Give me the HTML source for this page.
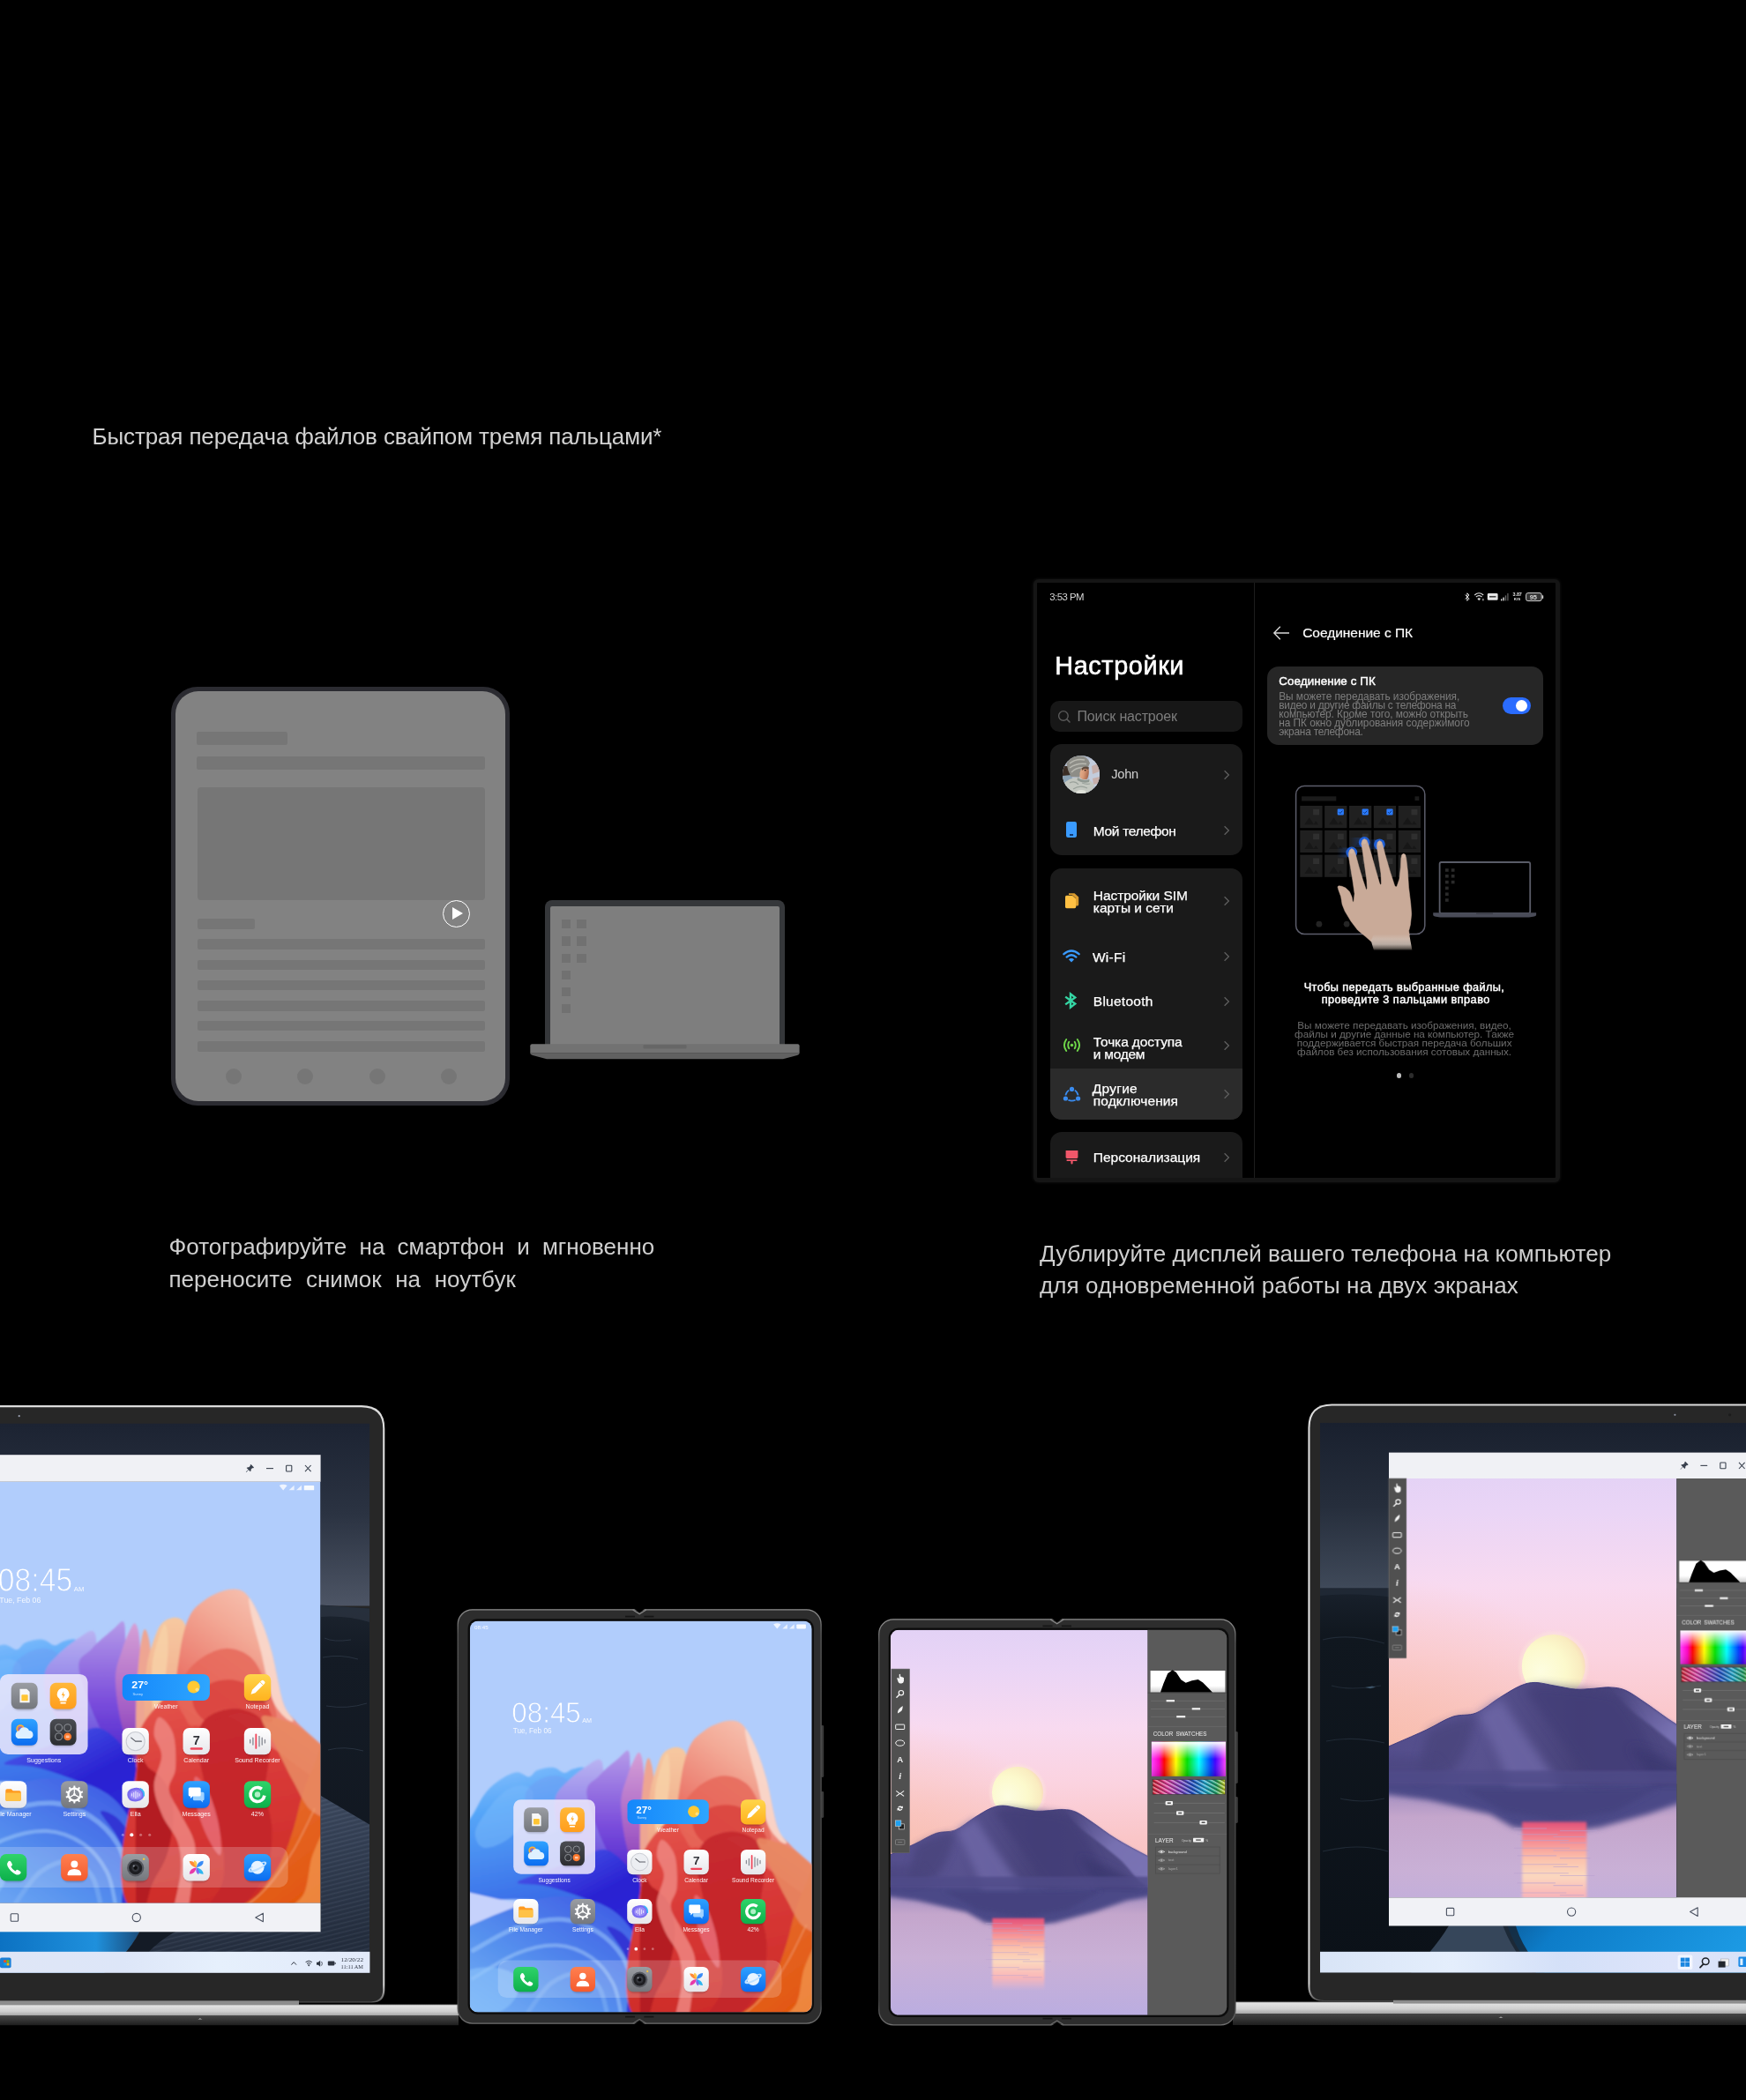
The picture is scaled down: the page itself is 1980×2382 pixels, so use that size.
<!DOCTYPE html>
<html lang="ru">
<head>
<meta charset="utf-8">
<title>Быстрая передача файлов</title>
<style>
*{margin:0;padding:0;box-sizing:border-box}
html,body{width:1980px;height:2382px;background:#000;overflow:hidden}
body{position:relative;font-family:"Liberation Sans",sans-serif;color:#fff}
#root{position:absolute;left:0;top:0;width:1980px;height:2382px;overflow:hidden;will-change:transform;transform:translateZ(0)}
.abs{position:absolute}
.t{position:absolute;white-space:nowrap;line-height:1}
/* header + captions */
#h1{left:104.5px;top:482.4px;font-size:26px;color:#d2d2d2;letter-spacing:-0.125px}
#capL{left:191.5px;top:1396.4px;font-size:26px;color:#cfcfcf;line-height:36.4px;word-spacing:7px}
#capR{left:1179px;top:1403.5px;font-size:26px;color:#cfcfcf;line-height:36.5px;letter-spacing:0.05px}
/* gray illustration */
#gt{left:194px;top:779px;width:383.5px;height:474.5px;border-radius:30px;background:#2b2b31}
#gt .in{position:absolute;left:4.5px;top:4.5px;right:4.5px;bottom:4.5px;border-radius:26px;background:#828282}
.gb{position:absolute;background:#767676;border-radius:2px}
.gc{position:absolute;width:18.4px;height:18.4px;border-radius:50%;background:#767676;top:1211.8px}
#play{left:502.3px;top:1021.3px;width:31.2px;height:31.2px;border-radius:50%;border:1.6px solid #fff}
#play:after{content:"";position:absolute;left:10px;top:6.6px;border-left:12.5px solid #fff;border-top:7.4px solid transparent;border-bottom:7.4px solid transparent}
#gl{left:617.8px;top:1021.2px;width:272.4px;height:164px;border-radius:8px 8px 0 0;background:#35373a}
#gl .in{position:absolute;left:6.3px;top:6.8px;right:6px;bottom:0;background:#7e7e7e;border-radius:2px 2px 0 0}
.gs{position:absolute;width:10.3px;height:10.4px;background:#717171}
/* settings panel */
#sp{left:1171.5px;top:656.5px;width:597px;height:684px;border-radius:6px;background:#151515;box-shadow:0 0 2.5px 0.5px #0d0d0d}
#spi{left:4.5px;top:4.5px;width:588px;height:675px;background:#000;overflow:hidden;border-radius:1px}
.card{background:#1a1a1a;border-radius:13px}
#ava{width:42.8px;height:42.8px;border-radius:50%;overflow:hidden;background:#8a8a86}
</style>
</head>
<body>
<div id="root">

<!-- HEADER -->
<div class="t" id="h1">Быстрая передача файлов свайпом тремя пальцами*</div>

<!-- GRAY TABLET + LAPTOP -->
<div class="abs" id="gt"><div class="in"></div></div>
<div class="gb" style="left:222.5px;top:830.4px;width:103.5px;height:15px"></div>
<div class="gb" style="left:222.5px;top:858.4px;width:327.5px;height:15px"></div>
<div class="gb" style="left:224.2px;top:893px;width:325.8px;height:128.4px;border-radius:4px"></div>
<div class="gb" style="left:224.2px;top:1042px;width:65.2px;height:12px"></div>
<div class="gb" style="left:224.2px;top:1065.3px;width:325.8px;height:11.6px"></div>
<div class="gb" style="left:224.2px;top:1088.6px;width:325.8px;height:11.6px"></div>
<div class="gb" style="left:224.2px;top:1111.9px;width:325.8px;height:11.6px"></div>
<div class="gb" style="left:224.2px;top:1135px;width:325.8px;height:11.6px"></div>
<div class="gb" style="left:224.2px;top:1157.9px;width:325.8px;height:11.6px"></div>
<div class="gb" style="left:224.2px;top:1180.9px;width:325.8px;height:11.8px"></div>
<div class="gc" style="left:255.8px"></div><div class="gc" style="left:337px"></div><div class="gc" style="left:418.5px"></div><div class="gc" style="left:500px"></div>
<div class="abs" id="play"></div>
<div class="abs" id="gl"><div class="in"></div></div>
<svg class="abs" style="left:595px;top:1180px" width="320" height="26" viewBox="595 1180 320 26">
  <path d="M601.3 1186.3 Q601.3 1184.3 603.3 1184.3 H904.6 Q906.6 1184.3 906.6 1186.3 V1194.7 H601.3Z" fill="#727272"/>
  <path d="M601.3 1194.7 H906.6 Q906.6 1196 904 1197 L888 1201.3 H620 L604 1197 Q601.3 1196 601.3 1194.7Z" fill="#616161"/>
  <rect x="729.5" y="1185.2" width="49" height="4.4" rx="1" fill="#666"/>
</svg>
<div class="gs" style="left:636.7px;top:1043.1px"></div><div class="gs" style="left:654.3px;top:1043.1px"></div>
<div class="gs" style="left:636.7px;top:1062.4px"></div><div class="gs" style="left:654.3px;top:1062.4px"></div>
<div class="gs" style="left:636.7px;top:1081.6px"></div><div class="gs" style="left:654.3px;top:1081.6px"></div>
<div class="gs" style="left:636.7px;top:1100.7px"></div>
<div class="gs" style="left:636.7px;top:1119.9px"></div>
<div class="gs" style="left:636.7px;top:1139px"></div>

<!-- CAPTIONS -->
<div class="t" id="capL">Фотографируйте на смартфон и мгновенно<br><span style="word-spacing:8.4px">переносите снимок на ноутбук</span></div>
<div class="t" id="capR">Дублируйте дисплей вашего телефона на компьютер<br><span style="letter-spacing:0.12px">для одновременной работы на двух экранах</span></div>

<!-- SETTINGS PANEL -->
<div class="abs" id="sp"><div class="abs" id="spi">
<div class="abs" style="left:246.2px;top:0;width:1px;height:675px;background:#1d1d1d"></div>
<div class="t" style="left:14.2px;top:10.7px;font-size:11.4px;color:#d6d6d6;font-weight:400;letter-spacing:-0.5px">3:53 PM</div>
<div class="t" style="left:20.3px;top:79.9px;font-size:28.8px;color:#fff;font-weight:400;letter-spacing:0.62px;-webkit-text-stroke:0.6px #fff">Настройки</div>
<div class="abs" style="left:14.8px;top:133.9px;width:217.9px;height:34.8px;border-radius:10px;background:#171717"></div>
<svg class="abs" style="left:22.5px;top:143.5px" width="16" height="16" viewBox="0 0 16 16"><circle cx="6.9" cy="6.9" r="5.3" fill="none" stroke="#5a5a5a" stroke-width="1.4"/><path d="M10.9 10.9 L14 14" stroke="#5a5a5a" stroke-width="1.5" stroke-linecap="round"/></svg>
<div class="t" style="left:45.5px;top:144.1px;font-size:16px;color:#7c7c7c;font-weight:400;letter-spacing:-0.15px">Поиск настроек</div>
<div class="abs card" style="left:14.8px;top:183.0px;width:217.9px;height:126px"></div>
<div class="abs" id="ava" style="left:28.6px;top:195.9px"><svg width="42.8" height="42.8" viewBox="0 0 42.8 42.8"><defs><filter id="avb"><feGaussianBlur stdDeviation="0.7"/></filter><linearGradient id="avf" x1="0" y1="0" x2="1" y2="0.3"><stop offset="0" stop-color="#e6b391"/><stop offset="0.55" stop-color="#d89a78"/><stop offset="1" stop-color="#a96a4e"/></linearGradient></defs><rect width="42.8" height="42.8" fill="#b3bdd0"/><g filter="url(#avb)"><path d="M30 4 L43 8 V34 L30 36Z" fill="#c3ccdc"/><path d="M33 12 l7 -3 l2 9 l-8 3z M34 26 l8 -2 v7 l-7 2z" fill="#c7a69c" opacity="0.8"/><rect x="0" y="12" width="9" height="12" fill="#3b2e27"/><path d="M0 23 L10 22 L13 34 L2 36Z" fill="#8aa1b3"/><path d="M4.5 9 Q8 1 19 0 Q28 0.5 31 8.5 L28.5 14 Q22 17 19 24.5 L9.5 24 Q5.5 17 4.5 9Z" fill="#8d8d87"/><path d="M8 9 Q15 3 25 5 M8 14 Q16 8 27 9.5 M10 19 Q16 13 24 14" stroke="#b9b9b1" stroke-width="1.5" fill="none"/><path d="M21 15 Q25 11.5 29.5 14.5 Q30.5 21 28 26.5 Q24 28.5 19.5 25 Q19 19 21 15Z" fill="url(#avf)"/><path d="M21.5 14.5 Q25 11 30 13.5 L29 16 Q25 13.5 22 17Z" fill="#5e4a3c"/><ellipse cx="25.6" cy="16.8" rx="1.1" ry="0.8" fill="#2a1c16"/><path d="M0 33 Q8 24 19 25 Q24 29 30 27 L36 33 L32 43 H4Z" fill="#c3c7c0"/><path d="M17 25 Q23 29.5 30.5 27 L30 30 Q23 32 16.5 28Z" fill="#8f9892"/><path d="M8 31 Q14 28 18 33 M12 38 Q20 33 28 37 M22 31 Q27 33 31 32" stroke="#9aa29b" stroke-width="1.2" fill="none"/><path d="M14 43 Q18 37 26 40 L27 43Z" fill="#e0e2da"/></g></svg></div>
<div class="t" style="left:84.3px;top:210.4px;font-size:14.6px;color:#d0d0d0;font-weight:400;letter-spacing:-0.25px">John</div>
<svg class="abs" style="left:211.1px;top:211.5px" width="8" height="12" viewBox="0 0 8 12"><path d="M1.6 1.2 L6.4 6 L1.6 10.8" fill="none" stroke="#5f5f5f" stroke-width="1.3"/></svg>
<div class="abs" style="left:32.6px;top:271.3px;width:12.8px;height:17.8px;border-radius:2.2px;background:#3a9bff"><div style="position:absolute;left:4.4px;bottom:2.6px;width:4px;height:1.6px;background:#123a72"></div></div>
<div class="t" style="left:63.8px;top:273.8px;font-size:15.5px;color:#fff;font-weight:400;-webkit-text-stroke:0.25px #fff;letter-spacing:-0.32px">Мой телефон</div>
<svg class="abs" style="left:211.1px;top:274.9px" width="8" height="12" viewBox="0 0 8 12"><path d="M1.6 1.2 L6.4 6 L1.6 10.8" fill="none" stroke="#5f5f5f" stroke-width="1.3"/></svg>
<div class="abs card" style="left:14.8px;top:323.7px;width:217.9px;height:285px;overflow:hidden"><div style="position:absolute;left:0;right:0;top:226.9px;bottom:0;background:#2b2b2b"></div></div>
<svg class="abs" style="left:31.0px;top:351.4px" width="18" height="20" viewBox="0 0 18 20"><path d="M5 1.2 H11.5 L16.2 5.6 V14 Q16.2 15.6 14.6 15.6 H13 V7 L8.6 3 H5Z" fill="#d89a2e"/><path d="M2.6 3.8 H9 L13.2 7.6 V16.6 Q13.2 18.2 11.6 18.2 H2.6 Q1 18.2 1 16.6 V5.4 Q1 3.8 2.6 3.8Z" fill="#ffc043"/></svg>
<div class="t" style="left:63.8px;top:346.7px;font-size:15.5px;color:#fff;font-weight:400;-webkit-text-stroke:0.25px #fff;letter-spacing:-0.07px">Настройки SIM</div>
<div class="t" style="left:63.8px;top:360.6px;font-size:15.5px;color:#fff;font-weight:400;-webkit-text-stroke:0.25px #fff;letter-spacing:0px">карты и сети</div>
<svg class="abs" style="left:211.1px;top:355.2px" width="8" height="12" viewBox="0 0 8 12"><path d="M1.6 1.2 L6.4 6 L1.6 10.8" fill="none" stroke="#5f5f5f" stroke-width="1.3"/></svg>
<svg class="abs" style="left:29.0px;top:415.8px" width="20" height="16" viewBox="0 0 20 16"><path d="M1.4 5.2 Q10 -2.2 18.6 5.2" fill="none" stroke="#3a9bff" stroke-width="2.3" stroke-linecap="round"/><path d="M4.6 8.6 Q10 4 15.4 8.6" fill="none" stroke="#3a9bff" stroke-width="2.3" stroke-linecap="round"/><path d="M10 14.6 L6.9 11.3 Q10 8.9 13.1 11.3Z" fill="#3a9bff"/></svg>
<div class="t" style="left:62.9px;top:416.5px;font-size:15.5px;color:#fff;font-weight:400;-webkit-text-stroke:0.25px #fff;letter-spacing:0.3px">Wi-Fi</div>
<svg class="abs" style="left:211.1px;top:417.7px" width="8" height="12" viewBox="0 0 8 12"><path d="M1.6 1.2 L6.4 6 L1.6 10.8" fill="none" stroke="#5f5f5f" stroke-width="1.3"/></svg>
<svg class="abs" style="left:30.0px;top:464.3px" width="17" height="20" viewBox="0 0 17 20"><path d="M2.2 5.6 L13.2 13.6 L8 17.6 V2.4 L13.2 6.4 L2.2 14.4" fill="none" stroke="#35d6a4" stroke-width="2.4" stroke-linejoin="miter"/></svg>
<div class="t" style="left:63.8px;top:466.9px;font-size:15.5px;color:#fff;font-weight:400;-webkit-text-stroke:0.25px #fff;letter-spacing:0.26px">Bluetooth</div>
<svg class="abs" style="left:211.1px;top:468.5px" width="8" height="12" viewBox="0 0 8 12"><path d="M1.6 1.2 L6.4 6 L1.6 10.8" fill="none" stroke="#5f5f5f" stroke-width="1.3"/></svg>
<svg class="abs" style="left:28.5px;top:516.4px" width="21" height="17" viewBox="0 0 21 17"><g fill="none" stroke="#6fd84a" stroke-width="1.9" stroke-linecap="round"><path d="M4.2 2 Q-0.4 8.5 4.2 15"/><path d="M16.8 2 Q21.4 8.5 16.8 15"/><path d="M7.3 4.8 Q5 8.5 7.3 12.2"/><path d="M13.7 4.8 Q16 8.5 13.7 12.2"/></g><circle cx="10.5" cy="8.5" r="1.7" fill="#6fd84a"/></svg>
<div class="t" style="left:63.8px;top:512.7px;font-size:15.5px;color:#fff;font-weight:400;-webkit-text-stroke:0.25px #fff;letter-spacing:-0.1px">Точка доступа</div>
<div class="t" style="left:63.8px;top:526.8px;font-size:15.5px;color:#fff;font-weight:400;-webkit-text-stroke:0.25px #fff;letter-spacing:-0.25px">и модем</div>
<svg class="abs" style="left:211.1px;top:519.3px" width="8" height="12" viewBox="0 0 8 12"><path d="M1.6 1.2 L6.4 6 L1.6 10.8" fill="none" stroke="#5f5f5f" stroke-width="1.3"/></svg>
<svg class="abs" style="left:28.5px;top:570.5px" width="21" height="19" viewBox="0 0 21 19"><g fill="none" stroke="#3a8cf0" stroke-width="1.7"><path d="M7.2 4.6 Q4 6.6 3.4 10.4"/><path d="M13.8 4.6 Q17 6.6 17.6 10.4"/><path d="M6.4 15.8 Q10.5 17.6 14.6 15.8"/></g><circle cx="10.5" cy="3.4" r="2.6" fill="#3a8cf0"/><circle cx="3.4" cy="14" r="2.6" fill="#3a8cf0"/><circle cx="17.6" cy="14" r="2.6" fill="#3a8cf0"/></svg>
<div class="t" style="left:62.7px;top:565.7px;font-size:15.5px;color:#fff;font-weight:400;-webkit-text-stroke:0.25px #fff;letter-spacing:0.28px">Другие</div>
<div class="t" style="left:63.8px;top:579.6px;font-size:15.5px;color:#fff;font-weight:400;-webkit-text-stroke:0.25px #fff;letter-spacing:0.08px">подключения</div>
<svg class="abs" style="left:211.1px;top:573.7px" width="8" height="12" viewBox="0 0 8 12"><path d="M1.6 1.2 L6.4 6 L1.6 10.8" fill="none" stroke="#5f5f5f" stroke-width="1.3"/></svg>
<div class="abs card" style="left:14.8px;top:622.8px;width:217.9px;height:80px"></div>
<svg class="abs" style="left:31.0px;top:643.0px" width="17" height="18" viewBox="0 0 17 18"><path d="M1.6 1 H15.4 V8.6 Q15.4 10 14 10 H3 Q1.6 10 1.6 8.6Z" fill="#f0576a"/><path d="M2.6 11.2 H14.4 V12.9 H9.6 V15.2 Q9.6 16.4 8.5 16.4 Q7.4 16.4 7.4 15.2 V12.9 H2.6Z" fill="#f0576a"/></svg>
<div class="t" style="left:63.8px;top:643.6px;font-size:15.5px;color:#fff;font-weight:400;-webkit-text-stroke:0.25px #fff;letter-spacing:0px">Персонализация</div>
<svg class="abs" style="left:211.1px;top:645.7px" width="8" height="12" viewBox="0 0 8 12"><path d="M1.6 1.2 L6.4 6 L1.6 10.8" fill="none" stroke="#5f5f5f" stroke-width="1.3"/></svg>
<svg class="abs" style="left:482.0px;top:9.0px" width="94" height="14" viewBox="1658 670 94 14">
<path d="M1661.6 674.6 L1666 679.2 L1663.8 681.4 V672.8 L1666 675 L1661.6 679.6" fill="none" stroke="#e0e0e0" stroke-width="1"/>
<path d="M1672.2 675 Q1677.2 670.6 1682.2 675" fill="none" stroke="#e0e0e0" stroke-width="1.1"/><path d="M1673.9 677 Q1677.2 674.2 1680.5 677" fill="none" stroke="#e0e0e0" stroke-width="1.1"/><path d="M1677.2 681.2 L1675.3 678.9 Q1677.2 677.5 1679.1 678.9Z" fill="#e0e0e0"/><rect x="1681.4" y="679" width="1" height="2.4" fill="#e0e0e0"/>
<rect x="1686.8" y="673" width="11.8" height="7.8" rx="1.4" fill="#e6e6e6"/><rect x="1689" y="676" width="7.4" height="1.6" fill="#444"/>
<rect x="1702" y="679.4" width="1.4" height="2" fill="#e0e0e0"/><rect x="1704.4" y="677.6" width="1.4" height="3.8" fill="#e0e0e0"/><rect x="1706.8" y="675.4" width="1.4" height="6" fill="#666"/><rect x="1709.2" y="673" width="1.4" height="8.4" fill="#555"/>
<rect x="1730.6" y="672.6" width="17.6" height="9" rx="2.2" fill="#333" stroke="#cfcfcf" stroke-width="1"/><rect x="1748.8" y="675.2" width="1.4" height="3.8" rx="0.6" fill="#cfcfcf"/>
</svg>
<div class="t" style="left:539.6px;top:11.0px;font-size:5.4px;color:#e0e0e0;font-weight:700;letter-spacing:-0.1px">3.87</div>
<div class="t" style="left:540.8px;top:16.9px;font-size:4.4px;color:#e0e0e0;font-weight:700;">K/S</div>
<div class="t" style="left:558.8px;top:13.1px;font-size:7.4px;color:#d8d8d8;font-weight:700;letter-spacing:-0.1px">95</div>
<svg class="abs" style="left:267.0px;top:47.5px" width="21" height="18" viewBox="0 0 21 18"><path d="M8.8 1.8 L1.8 9 L8.8 16.2 M2 9 H19" fill="none" stroke="#d8d8d8" stroke-width="1.35"/></svg>
<div class="t" style="left:301.2px;top:49.0px;font-size:15.5px;color:#fff;font-weight:400;letter-spacing:-0.03px;-webkit-text-stroke:0.2px #fff">Соединение с ПК</div>
<div class="abs" style="left:261.2px;top:95.4px;width:312.7px;height:88.8px;border-radius:13px;background:#262626"></div>
<div class="t" style="left:274.2px;top:104.8px;font-size:13.4px;color:#fff;font-weight:400;letter-spacing:0.1px;-webkit-text-stroke:0.45px #fff">Соединение с ПК</div>
<div class="t" style="left:274.2px;top:123.9px;font-size:11.9px;color:#7d7d7d;font-weight:400;letter-spacing:-0.06px">Вы можете передавать изображения,</div>
<div class="t" style="left:274.2px;top:133.7px;font-size:11.9px;color:#7d7d7d;font-weight:400;letter-spacing:-0.23px">видео и другие файлы с телефона на</div>
<div class="t" style="left:274.2px;top:143.9px;font-size:11.9px;color:#7d7d7d;font-weight:400;letter-spacing:-0.065px">компьютер. Кроме того, можно открыть</div>
<div class="t" style="left:274.2px;top:153.9px;font-size:11.9px;color:#7d7d7d;font-weight:400;letter-spacing:-0.05px">на ПК окно дублирования содержимого</div>
<div class="t" style="left:274.2px;top:163.9px;font-size:11.9px;color:#7d7d7d;font-weight:400;letter-spacing:-0.22px">экрана телефона.</div>
<div class="abs" style="left:527.8px;top:129.8px;width:32.2px;height:19.6px;border-radius:10px;background:#2a6cff"><div style="position:absolute;right:3.6px;top:3.3px;width:13px;height:13px;border-radius:50%;background:#fff"></div></div>
<svg class="abs" style="left:284.0px;top:224.0px" width="290" height="200" viewBox="1460 885 290 200">
<defs><linearGradient id="wr" x1="0" y1="0" x2="0" y2="1"><stop offset="0" stop-color="#c9aa98"/><stop offset="0.3" stop-color="#cdb8ab"/><stop offset="0.62" stop-color="#b9aba2"/><stop offset="0.88" stop-color="#5e5650"/><stop offset="1" stop-color="#000"/></linearGradient><linearGradient id="tr" x1="0" y1="0" x2="1" y2="0"><stop offset="0" stop-color="#1d4fb0" stop-opacity="0"/><stop offset="1" stop-color="#1d4fb0" stop-opacity="0.45"/></linearGradient><g id="cell"><rect width="25.3" height="25.2" fill="#202020"/><path d="M5.1 21.3 L10.4 13.3 L15.8 21.3Z M15.3 21.3 L17.8 17.3 L20.7 21.3Z" fill="#171717"/></g></defs>
<rect x="1469.6" y="891.4" width="146.2" height="168" rx="9.5" fill="#000" stroke="#5c5d6b" stroke-width="1.5"/>
<rect x="1476.1" y="903.3" width="39.2" height="5.2" fill="#1b1b1b"/><rect x="1604.5" y="903.3" width="4.8" height="4.8" fill="#1b1b1b"/>
<use href="#cell" x="1474.3" y="914.0"/>
<rect x="1489.1" y="917.8" width="6.9" height="6.6" fill="#2f2f2f"/>
<use href="#cell" x="1502.1" y="914.0"/>
<rect x="1516.7" y="917.6" width="7.2" height="7" rx="1" fill="#2a7bff"/><path d="M1518.4 921.1 l1.4 1.5 l2.6 -3" fill="none" stroke="#0d2f6a" stroke-width="0.9"/>
<use href="#cell" x="1530.0" y="914.0"/>
<rect x="1544.6" y="917.6" width="7.2" height="7" rx="1" fill="#2a7bff"/><path d="M1546.3 921.1 l1.4 1.5 l2.6 -3" fill="none" stroke="#0d2f6a" stroke-width="0.9"/>
<use href="#cell" x="1557.8" y="914.0"/>
<rect x="1572.4" y="917.6" width="7.2" height="7" rx="1" fill="#2a7bff"/><path d="M1574.1 921.1 l1.4 1.5 l2.6 -3" fill="none" stroke="#0d2f6a" stroke-width="0.9"/>
<use href="#cell" x="1585.7" y="914.0"/>
<rect x="1600.5" y="917.8" width="6.9" height="6.6" fill="#2f2f2f"/>
<use href="#cell" x="1474.3" y="941.8"/>
<rect x="1489.1" y="945.6" width="6.9" height="6.6" fill="#2f2f2f"/>
<use href="#cell" x="1502.1" y="941.8"/>
<rect x="1516.9" y="945.6" width="6.9" height="6.6" fill="#2f2f2f"/>
<use href="#cell" x="1530.0" y="941.8"/>
<rect x="1544.8" y="945.6" width="6.9" height="6.6" fill="#2f2f2f"/>
<use href="#cell" x="1557.8" y="941.8"/>
<rect x="1572.6" y="945.6" width="6.9" height="6.6" fill="#2f2f2f"/>
<use href="#cell" x="1585.7" y="941.8"/>
<rect x="1600.5" y="945.6" width="6.9" height="6.6" fill="#2f2f2f"/>
<use href="#cell" x="1474.3" y="969.6"/>
<rect x="1489.1" y="973.4" width="6.9" height="6.6" fill="#2f2f2f"/>
<use href="#cell" x="1502.1" y="969.6"/>
<rect x="1516.9" y="973.4" width="6.9" height="6.6" fill="#2f2f2f"/>
<use href="#cell" x="1530.0" y="969.6"/>
<rect x="1544.8" y="973.4" width="6.9" height="6.6" fill="#2f2f2f"/>
<use href="#cell" x="1557.8" y="969.6"/>
<rect x="1572.6" y="973.4" width="6.9" height="6.6" fill="#2f2f2f"/>
<use href="#cell" x="1585.7" y="969.6"/>
<rect x="1600.5" y="973.4" width="6.9" height="6.6" fill="#2f2f2f"/>
<circle cx="1495.9" cy="1048.2" r="3.4" fill="#242424"/>
<circle cx="1527.1" cy="1048.2" r="3.4" fill="#242424"/>
<circle cx="1558.3" cy="1048.2" r="3.4" fill="#242424"/>
<circle cx="1589.5" cy="1048.2" r="3.4" fill="#242424"/>
<rect x="1515.8" y="961.5" width="17" height="11" fill="url(#tr)"/>
<circle cx="1532.8" cy="967.0" r="6.4" fill="#1f5fd6"/>
<rect x="1530.2" y="950.0" width="17" height="11" fill="url(#tr)"/>
<circle cx="1547.2" cy="955.5" r="6.4" fill="#1f5fd6"/>
<rect x="1547.4" y="952.3" width="17" height="11" fill="url(#tr)"/>
<circle cx="1564.4" cy="957.8" r="6.4" fill="#1f5fd6"/>
<path d="M1535.0 1023.3 L1536.1 1013.8 L1533.9 998.6 L1531.4 983.3 L1529.6 972.7 L1529.3 968.1 L1530.5 964.3 L1532.8 962.6 L1535.2 963.9 L1537.0 968.1 L1541.1 983.3 L1545.7 998.6 L1548.8 1007.7 L1549.5 1009.6 L1550.3 1007.7 L1549.9 998.6 L1547.2 979.5 L1545.0 964.3 L1543.8 956.7 L1545.0 952.9 L1547.2 951.5 L1549.9 952.9 L1551.4 956.7 L1554.9 968.1 L1560.2 987.1 L1564.4 1001.6 L1565.5 1003.8 L1566.4 1002.4 L1566.0 991.0 L1563.2 972.7 L1561.3 959.7 L1562.1 955.5 L1564.4 953.4 L1566.9 955.1 L1568.2 959.0 L1570.9 969.6 L1576.2 987.9 L1581.5 1004.3 L1583.0 1006.2 L1584.2 1005.0 L1586.9 997.0 L1588.4 983.3 L1588.8 973.4 L1589.9 969.6 L1591.8 968.5 L1593.7 970.0 L1594.7 973.4 L1596.4 987.9 L1597.5 1006.2 L1599.8 1025.2 L1600.7 1036.7 L1599.4 1048.9 L1597.7 1055.7 L1598.3 1061.0 L1554.9 1067.9 L1548.8 1062.6 L1539.6 1055.0 L1532.0 1045.0 L1525.1 1033.6 L1522.1 1026.0 L1520.6 1016.9 L1517.9 1009.6 L1516.9 1005.8 L1518.3 1004.8 L1521.7 1005.3 L1525.9 1007.1 L1530.5 1011.5 L1533.1 1017.6 L1533.9 1022.2Z" fill="#c9aa98" stroke="#c9aa98" stroke-width="0.5" stroke-linejoin="round"/>
<path d="M1598.1 1059.5 L1601.5 1078.2 L1558.1 1078.2 L1554.7 1067.1 L1557.9 1059.5Z" fill="url(#wr)"/>
<ellipse cx="1532.8" cy="965.8" rx="2.3" ry="2.6" fill="#d6b9a8" opacity="0.7"/>
<ellipse cx="1547.2" cy="954.8" rx="2.3" ry="2.6" fill="#d6b9a8" opacity="0.7"/>
<ellipse cx="1564.4" cy="956.7" rx="2.3" ry="2.6" fill="#d6b9a8" opacity="0.7"/>
<ellipse cx="1591.8" cy="970.8" rx="2.3" ry="2.6" fill="#d6b9a8" opacity="0.7"/>
<rect x="1632.6" y="978" width="102.6" height="58" rx="2" fill="#000" stroke="#5a5c68" stroke-width="1.8"/>
<path d="M1625.2 1035.3 H1742.1 V1038 Q1742.1 1039 1740 1039.4 L1734 1040.6 H1633 L1627 1039.4 Q1625.2 1039 1625.2 1038Z" fill="#4a4c58"/>
<rect x="1674" y="1035.6" width="19" height="1.4" fill="#3a3c46"/>
<rect x="1639" y="985.2" width="3.7" height="3.6" fill="#2a2a2a"/>
<rect x="1645.8" y="985.2" width="3.7" height="3.6" fill="#2a2a2a"/>
<rect x="1639" y="992.0" width="3.7" height="3.6" fill="#2a2a2a"/>
<rect x="1645.8" y="992.0" width="3.7" height="3.6" fill="#2a2a2a"/>
<rect x="1639" y="998.8" width="3.7" height="3.6" fill="#2a2a2a"/>
<rect x="1645.8" y="998.8" width="3.7" height="3.6" fill="#2a2a2a"/>
<rect x="1639" y="1005.6" width="3.7" height="3.6" fill="#2a2a2a"/>
<rect x="1639" y="1012.4" width="3.7" height="3.6" fill="#2a2a2a"/>
<rect x="1639" y="1019.2" width="3.7" height="3.6" fill="#2a2a2a"/>
</svg>
<div class="t" style="left:216.5px;width:400px;text-align:center;top:453.3px;font-size:12.7px;color:#fff;font-weight:400;letter-spacing:0.42px;-webkit-text-stroke:0.45px #fff">Чтобы передать выбранные файлы,</div>
<div class="t" style="left:218.2px;width:400px;text-align:center;top:467.3px;font-size:12.7px;color:#fff;font-weight:400;letter-spacing:0.46px;-webkit-text-stroke:0.45px #fff">проведите 3 пальцами вправо</div>
<div class="t" style="left:216.6px;width:400px;text-align:center;top:495.8px;font-size:11.7px;color:#6c6c6c;font-weight:400;">Вы можете передавать изображения, видео,</div>
<div class="t" style="left:216.6px;width:400px;text-align:center;top:505.7px;font-size:11.7px;color:#6c6c6c;font-weight:400;">файлы и другие данные на компьютер. Также</div>
<div class="t" style="left:216.6px;width:400px;text-align:center;top:515.6px;font-size:11.7px;color:#6c6c6c;font-weight:400;">поддерживается быстрая передача больших</div>
<div class="t" style="left:216.6px;width:400px;text-align:center;top:525.7px;font-size:11.7px;color:#6c6c6c;font-weight:400;">файлов без использования сотовых данных.</div>
<div class="abs" style="left:407.5px;top:556.4px;width:5.4px;height:5.4px;border-radius:50%;background:#bdbdbd"></div>
<div class="abs" style="left:421.7px;top:556.4px;width:5.4px;height:5.4px;border-radius:50%;background:#2c2c2c"></div>
</div></div>

<!-- DEVICES -->
<svg width="0" height="0" style="position:absolute"><defs>
<linearGradient id="frm" x1="0" y1="0" x2="0" y2="1"><stop offset="0" stop-color="#3a3a3a"/><stop offset="0.04" stop-color="#2a2a2a"/><stop offset="0.96" stop-color="#262626"/><stop offset="1" stop-color="#1c1c1c"/></linearGradient>
<linearGradient id="fst" x1="0" y1="0" x2="0" y2="1"><stop offset="0" stop-color="#909090"/><stop offset="0.06" stop-color="#5a5a5a"/><stop offset="0.94" stop-color="#3c3c3c"/><stop offset="1" stop-color="#707070"/></linearGradient>
</defs>
<symbol id="home" viewBox="0 0 388.1 444.2" preserveAspectRatio="none">
<defs>
<linearGradient id="hb1" x1="0" y1="0" x2="0.3" y2="1"><stop offset="0" stop-color="#8cc4fd"/><stop offset="0.35" stop-color="#55a5f8"/><stop offset="1" stop-color="#3a6ee8"/></linearGradient>
<linearGradient id="hb2" x1="0" y1="0" x2="0" y2="1"><stop offset="0" stop-color="#b9b3f2"/><stop offset="0.5" stop-color="#8a78e6"/><stop offset="1" stop-color="#5a34d6"/></linearGradient>
<linearGradient id="hb3" x1="0" y1="0" x2="0" y2="1"><stop offset="0" stop-color="#b59be8"/><stop offset="0.55" stop-color="#7c4fdc"/><stop offset="1" stop-color="#4a22cc"/></linearGradient>
<linearGradient id="hb4" x1="0" y1="0" x2="0" y2="1"><stop offset="0" stop-color="#d6a0d6"/><stop offset="0.6" stop-color="#a55fc6"/><stop offset="1" stop-color="#7a2fb0"/></linearGradient>
<linearGradient id="hb5" x1="0.2" y1="0" x2="0.8" y2="1"><stop offset="0" stop-color="#4a5cea"/><stop offset="0.5" stop-color="#2a22d2"/><stop offset="1" stop-color="#2e2ad8"/></linearGradient>
<linearGradient id="hb6" x1="0" y1="1" x2="1" y2="0"><stop offset="0" stop-color="#86bdf9"/><stop offset="0.45" stop-color="#5590ee"/><stop offset="1" stop-color="#3a50e2"/></linearGradient>
<linearGradient id="hr1" x1="0.8" y1="0" x2="0.2" y2="1"><stop offset="0" stop-color="#f9d3c4"/><stop offset="0.35" stop-color="#f3a996"/><stop offset="0.75" stop-color="#e8655a"/><stop offset="1" stop-color="#dc3f3c"/></linearGradient>
<linearGradient id="hr2" x1="0" y1="0" x2="0.2" y2="1"><stop offset="0" stop-color="#e85e52"/><stop offset="0.5" stop-color="#d93a38"/><stop offset="1" stop-color="#cc2a26"/></linearGradient>
<linearGradient id="hr3" x1="0" y1="0" x2="0.4" y2="1"><stop offset="0" stop-color="#ee9a72"/><stop offset="0.45" stop-color="#e5682a"/><stop offset="1" stop-color="#e2560e"/></linearGradient>
<linearGradient id="hr4" x1="0" y1="0" x2="0" y2="1"><stop offset="0" stop-color="#f6c8a0"/><stop offset="1" stop-color="#ee9a80"/></linearGradient>
<filter id="hbl" x="-5%" y="-5%" width="110%" height="110%"><feGaussianBlur stdDeviation="0.9"/></filter>
<filter id="hbl3" x="-20%" y="-20%" width="140%" height="140%"><feGaussianBlur stdDeviation="4"/></filter>
<filter id="ish" x="-20%" y="-20%" width="140%" height="150%"><feGaussianBlur stdDeviation="1.2"/></filter>
</defs>
<rect width="388.1" height="444.2" fill="#b1cdfc"/>
<g filter="url(#hbl)">
<path d="M-11.7 248.3 C-9.1 233.2 -1.0 227.9 4.1 218.9 C9.2 209.8 13.1 200.8 18.8 194.0 C24.4 187.2 32.2 181.9 38.0 178.2 C43.9 174.5 49.0 172.0 53.9 171.8 C58.8 171.6 63.7 177.4 67.4 177.0 C71.2 176.7 72.0 171.3 76.5 169.6 C81.0 167.8 89.5 165.9 94.6 166.4 C99.7 166.9 103.3 172.2 107.0 172.5 C110.8 172.8 113.3 168.9 117.2 168.0 C121.2 167.0 126.6 164.8 130.8 166.8 C134.9 168.9 135.7 169.1 142.1 180.4 C148.5 191.7 160.6 215.5 169.2 234.7 C177.9 254.0 200.2 281.5 194.1 295.8 C188.1 310.1 154.5 317.3 133.0 320.7 C111.6 324.1 89.3 318.1 65.2 316.2 C41.0 314.3 1.1 320.7 -11.7 309.4 C-24.6 298.1 -14.4 263.4 -11.7 248.3Z" fill="url(#hb1)"/>
<path d="M6.3 239.2 C7.5 231.7 16.2 220.0 22.2 212.1 C28.2 204.2 36.1 195.9 42.5 191.7 C49.0 187.6 55.7 186.5 60.6 187.2 C65.6 188.0 71.2 190.2 72.0 196.3 C72.7 202.3 70.1 214.7 65.2 223.4 C60.3 232.1 50.8 242.6 42.5 248.3 C34.3 254.0 21.4 258.9 15.4 257.3 C9.4 255.8 5.2 246.8 6.3 239.2Z" fill="#7cbcfb" opacity="0.5"/>
<path d="M62.9 198.5 C64.0 189.5 72.7 184.2 78.7 180.4 C84.8 176.7 93.5 175.1 99.1 175.9 C104.8 176.7 110.0 178.9 112.7 184.9 C115.3 191.0 117.6 203.0 114.9 212.1 C112.3 221.1 104.0 235.5 96.8 239.2 C89.7 243.0 77.6 241.5 72.0 234.7 C66.3 227.9 61.8 207.6 62.9 198.5Z" fill="#6f9ff4" opacity="0.55"/>
<path d="M96.8 203.0 C98.0 193.6 104.4 189.1 110.4 182.7 C116.5 176.3 126.7 168.7 133.0 164.6 C139.4 160.4 145.0 155.2 148.4 157.8 C151.8 160.4 150.7 169.5 153.4 180.4 C156.1 191.4 157.9 204.2 164.7 223.4 C171.5 242.6 197.9 285.6 194.1 295.8 C190.4 306.0 157.2 293.9 142.1 284.5 C127.0 275.1 111.2 252.8 103.6 239.2 C96.1 225.7 95.7 212.5 96.8 203.0Z" fill="url(#hb2)"/>
<path d="M133.0 198.5 C130.8 183.1 140.6 183.1 146.6 175.9 C152.7 168.7 163.7 160.2 169.2 155.5 C174.8 150.9 177.9 145.2 180.1 147.8 C182.3 150.5 181.3 159.9 182.4 171.4 C183.4 182.8 184.3 195.9 186.2 216.6 C188.1 237.4 198.0 287.1 193.7 295.8 C189.3 304.5 170.3 284.9 160.2 268.7 C150.1 252.4 135.3 214.0 133.0 198.5Z" fill="url(#hb3)"/>
<path d="M171.5 207.6 C171.5 194.4 175.8 186.5 178.3 178.2 C180.7 169.9 183.8 162.5 186.2 157.8 C188.6 153.1 190.9 147.6 192.8 149.9 C194.6 152.1 196.4 158.0 197.3 171.4 C198.2 184.8 198.7 209.1 198.2 230.2 C197.8 251.3 197.9 293.5 194.6 298.1 C191.3 302.6 182.1 272.4 178.3 257.3 C174.4 242.3 171.5 220.8 171.5 207.6Z" fill="url(#hb4)"/>
<path d="M53.9 296.9 C54.6 294.1 76.1 287.9 87.8 283.4 C99.5 278.8 113.1 273.7 124.0 269.8 C134.9 265.8 144.4 258.3 153.4 259.6 C162.5 260.9 171.5 270.5 178.3 277.7 C185.1 284.9 191.4 284.9 194.1 302.6 C196.8 320.3 197.2 376.5 194.6 384.0 C191.9 391.6 185.5 357.6 178.3 347.8 C171.1 338.0 161.7 331.6 151.1 325.2 C140.6 318.8 126.3 313.5 114.9 309.4 C103.6 305.2 93.5 302.4 83.3 300.3 C73.1 298.3 53.1 299.8 53.9 296.9Z" fill="url(#hb5)"/>
<path d="M-11.7 350.1 C-4.6 329.4 14.6 338.0 31.2 332.0 C47.8 326.0 70.8 316.5 87.8 313.9 C104.8 311.3 119.8 313.2 133.0 316.2 C146.2 319.2 157.6 324.5 167.0 332.0 C176.4 339.5 184.9 351.2 189.6 361.4 C194.3 371.6 194.3 377.3 195.3 393.1 C196.2 408.9 229.8 445.9 195.3 456.4 C160.8 467.0 22.8 474.2 -11.7 456.4 C-46.3 438.7 -18.9 370.8 -11.7 350.1Z" fill="url(#hb6)"/>
<path d="M-9.5 306.0 L24.4 313.9 L58.4 321.8 L26.7 334.3 L-9.5 350.1Z" fill="#c6d2fc"/>
<path d="M1.8 375.0 C10.5 370.5 36.5 353.9 53.9 347.8 C71.2 341.8 90.8 338.0 105.9 338.8 C121.0 339.5 133.0 345.2 144.4 352.4 C155.7 359.5 166.6 370.1 173.8 381.8 C180.9 393.5 185.1 415.7 187.3 422.5" fill="none" stroke="#9cc8fb" stroke-width="5" opacity="0.55"/>
<path d="M1.8 406.7 C10.5 401.8 37.6 383.7 53.9 377.3 C70.1 370.8 85.2 367.5 99.1 368.2 C113.1 369.0 127.0 374.6 137.6 381.8 C148.1 388.9 156.8 400.6 162.5 411.2 C168.1 421.8 170.0 439.5 171.5 445.1" fill="none" stroke="#a8d0fc" stroke-width="4" opacity="0.5"/>
<path d="M65.2 445.1 C69.7 439.5 82.5 418.7 92.3 411.2 C102.1 403.7 114.9 399.1 124.0 399.9 C133.0 400.6 141.3 408.2 146.6 415.7 C151.9 423.3 154.2 440.2 155.7 445.1" fill="none" stroke="#86b6f6" stroke-width="5" opacity="0.5"/>
<path d="M-11.7 404.4 C-5.7 393.8 13.1 392.7 24.4 393.1 C35.8 393.5 53.1 399.1 56.1 406.7 C59.1 414.2 53.9 430.0 42.5 438.3 C31.2 446.6 -2.7 462.1 -11.7 456.4 C-20.8 450.8 -17.8 415.0 -11.7 404.4Z" fill="#8fc6fb" opacity="0.55"/>
<path d="M155.7 347.8 C156.0 344.8 169.8 350.1 176.0 356.9 C182.3 363.7 190.1 373.9 193.0 388.6 C195.9 403.3 196.1 435.7 193.7 445.1 C191.2 454.6 180.1 451.9 178.3 445.1 C176.5 438.3 183.6 416.1 182.8 404.4 C182.1 392.7 178.3 384.4 173.8 375.0 C169.2 365.6 155.3 350.9 155.7 347.8Z" fill="#2f2bd0" opacity="0.85"/>
<path d="M194.6 298.1 C193.1 287.5 192.8 254.7 193.2 234.7 C193.7 214.7 195.7 191.4 197.3 178.2 C198.9 165.0 200.8 155.2 202.7 155.5 C204.7 155.9 207.8 166.5 208.8 180.4 C209.9 194.4 210.0 219.6 208.8 239.2 C207.7 258.9 204.4 288.3 202.1 298.1 C199.7 307.9 196.1 308.6 194.6 298.1Z" fill="#eea592"/>
<path d="M202.1 248.3 C201.5 231.3 202.2 211.0 204.3 196.3 C206.4 181.6 211.3 168.3 214.5 160.1 C217.7 151.8 219.7 149.7 223.5 146.9 C227.4 144.2 233.8 142.3 237.6 143.8 C241.3 145.2 245.0 146.8 246.2 155.5 C247.3 164.3 245.9 180.8 244.4 196.3 C242.9 211.7 241.0 232.1 237.1 248.3 C233.3 264.5 226.2 285.3 221.3 293.5 C216.4 301.8 210.9 305.6 207.7 298.1 C204.5 290.5 202.6 265.3 202.1 248.3Z" fill="url(#hr4)"/>
<path d="M210.0 196.3 C210.9 181.9 215.4 169.9 217.9 162.3 C220.3 154.8 223.2 148.0 224.7 151.0 C226.2 154.0 227.7 167.2 226.9 180.4 C226.2 193.6 222.6 218.9 220.2 230.2 C217.7 241.5 213.9 254.0 212.2 248.3 C210.5 242.6 209.0 210.6 210.0 196.3Z" fill="#f7d2a8" opacity="0.8"/>
<path d="M193.7 300.3 C194.3 267.9 192.9 273.6 197.5 261.9 C202.1 250.2 213.2 238.5 221.3 230.2 C229.4 221.9 236.4 217.8 246.2 212.1 C256.0 206.4 268.8 198.5 280.1 196.3 C291.4 194.0 304.6 194.0 314.0 198.5 C323.5 203.0 329.1 214.5 336.7 223.4 C344.2 232.3 350.7 242.7 359.3 251.7 C367.9 260.7 379.4 269.5 388.0 277.3 C396.7 285.0 406.3 282.5 411.3 298.1 C416.3 313.6 418.1 344.1 418.1 370.5 C418.1 396.9 448.7 442.1 411.3 456.4 C373.9 470.8 230.0 482.5 193.7 456.4 C157.4 430.4 193.0 332.8 193.7 300.3Z" fill="url(#hr2)"/>
<path d="M236.2 230.2 C233.3 217.0 237.6 192.9 239.8 178.2 C242.1 163.5 245.3 150.8 249.6 142.0 C253.8 133.1 259.6 129.4 265.4 125.0 C271.2 120.5 278.5 117.1 284.6 115.3 C290.8 113.4 297.4 112.5 302.3 113.9 C307.2 115.3 310.2 118.4 314.0 123.9 C317.9 129.3 321.6 137.1 325.4 146.5 C329.1 155.9 332.8 166.1 336.7 180.4 C340.5 194.8 344.5 220.7 348.4 232.5 C352.4 244.2 353.8 243.7 360.4 251.0 C367.0 258.3 379.2 268.5 388.0 276.4 C396.9 284.2 410.8 289.9 413.6 298.1 C416.3 306.2 417.4 328.2 404.5 325.2 C391.7 322.2 355.5 292.8 336.7 280.0 C317.8 267.2 304.6 252.1 291.4 248.3 C278.2 244.5 266.7 260.4 257.5 257.3 C248.3 254.3 239.2 243.4 236.2 230.2Z" fill="url(#hr1)"/>
<path d="M312.9 122.7 C314.6 123.5 321.4 136.9 325.4 146.5 C329.3 156.1 332.8 166.1 336.7 180.4 C340.5 194.8 344.7 220.6 348.4 232.5 C352.2 244.3 359.0 249.1 359.3 251.7 C359.6 254.3 354.0 252.3 350.2 248.3 C346.5 244.3 340.8 239.2 336.7 227.9 C332.5 216.6 328.9 194.8 325.4 180.4 C321.8 166.1 317.2 151.6 315.2 142.0 C313.1 132.3 311.2 122.0 312.9 122.7Z" fill="#fad9cd" opacity="0.9"/>
<path d="M240.5 216.6 C241.6 205.3 249.8 196.3 257.5 189.5 C265.2 182.7 277.5 176.7 286.9 175.9 C296.3 175.1 306.9 178.9 314.0 184.9 C321.2 191.0 325.4 201.5 329.9 212.1 C334.4 222.7 343.8 243.8 341.2 248.3 C338.6 252.8 324.2 240.8 314.0 239.2 C303.9 237.7 290.7 236.2 280.1 239.2 C269.5 242.3 257.3 261.1 250.7 257.3 C244.1 253.6 239.4 227.9 240.5 216.6Z" fill="#e66558" opacity="0.8"/>
<path d="M253.0 230.2 C253.7 223.4 265.4 215.5 273.3 212.1 C281.2 208.7 292.2 207.9 300.5 209.8 C308.8 211.7 317.1 216.2 323.1 223.4 C329.1 230.6 340.1 249.4 336.7 252.8 C333.3 256.2 314.0 243.8 302.7 243.8 C291.4 243.8 277.1 255.1 268.8 252.8 C260.5 250.6 252.2 237.0 253.0 230.2Z" fill="#d9423e" opacity="0.85"/>
<path d="M194.6 302.6 C196.9 277.0 202.5 299.6 207.7 302.6 C212.9 305.6 221.7 312.4 225.8 320.7 C230.0 329.0 232.6 340.3 232.6 352.4 C232.6 364.4 229.6 381.0 225.8 393.1 C222.0 405.2 214.1 414.2 210.0 424.8 C205.8 435.3 203.6 451.2 200.9 456.4 C198.2 461.7 194.7 482.1 193.7 456.4 C192.6 430.8 192.2 328.2 194.6 302.6Z" fill="#b01a20" opacity="0.9"/>
<path d="M217.9 248.3 C221.3 248.3 229.8 257.3 232.6 266.4 C235.4 275.4 235.6 292.8 234.9 302.6 C234.1 312.4 226.9 316.9 228.1 325.2 C229.2 333.5 237.1 342.9 241.6 352.4 C246.2 361.8 253.3 371.2 255.2 381.8 C257.1 392.3 254.5 403.3 253.0 415.7 C251.4 428.2 249.6 449.7 246.2 456.4 C242.8 463.2 233.5 464.0 232.6 456.4 C231.7 448.9 239.8 424.0 240.5 411.2 C241.3 398.4 240.3 389.3 237.1 379.5 C233.9 369.7 225.4 362.2 221.3 352.4 C217.1 342.6 212.4 331.3 212.2 320.7 C212.0 310.1 220.2 298.1 220.2 289.0 C220.2 280.0 212.6 273.2 212.2 266.4 C211.9 259.6 214.5 248.3 217.9 248.3Z" fill="#ee8680" opacity="0.85"/>
<path d="M268.8 248.3 C275.6 243.0 288.8 238.9 298.2 239.2 C307.6 239.6 319.3 243.8 325.4 250.6 C331.4 257.3 333.6 267.5 334.4 280.0 C335.2 292.4 329.5 310.9 329.9 325.2 C330.3 339.5 336.3 352.4 336.7 365.9 C337.0 379.5 335.9 394.6 332.1 406.7 C328.4 418.7 320.8 430.0 314.0 438.3 C307.3 446.6 299.7 453.4 291.4 456.4 C283.1 459.5 265.4 462.1 264.3 456.4 C263.1 450.8 281.2 434.9 284.6 422.5 C288.0 410.1 286.5 395.0 284.6 381.8 C282.7 368.6 277.1 356.5 273.3 343.3 C269.5 330.1 264.6 314.7 262.0 302.6 C259.4 290.5 256.3 280.0 257.5 270.9 C258.6 261.9 262.0 253.6 268.8 248.3Z" fill="#c3262b" opacity="0.9"/>
<path d="M255.2 311.6 C257.1 308.6 264.6 317.3 268.8 325.2 C272.9 333.1 277.8 347.8 280.1 359.2 C282.4 370.5 284.3 390.5 282.4 393.1 C280.5 395.7 272.9 383.3 268.8 375.0 C264.6 366.7 259.7 353.9 257.5 343.3 C255.2 332.8 253.3 314.7 255.2 311.6Z" fill="#e8707a" opacity="0.8"/>
<path d="M395.5 280.0 C392.9 254.3 384.2 293.9 379.7 302.6 C375.1 311.3 371.7 321.4 368.3 332.0 C364.9 342.6 363.1 354.3 359.3 365.9 C355.5 377.6 351.7 390.8 345.7 402.1 C339.7 413.5 330.6 424.8 323.1 433.8 C315.6 442.9 288.4 452.7 300.5 456.4 C312.5 460.2 379.7 485.9 395.5 456.4 C411.3 427.0 398.1 305.6 395.5 280.0Z" fill="url(#hr3)"/>
<path d="M325.8 248.3 C327.3 243.6 343.2 249.6 350.2 251.7 C357.3 253.8 362.0 256.4 368.3 260.7 C374.6 265.1 380.9 271.1 388.0 277.7 C395.2 284.3 407.4 287.9 411.3 300.3 C415.2 312.8 416.6 344.5 411.3 352.4 C406.0 360.3 388.3 353.9 379.7 347.8 C371.0 341.8 365.7 327.5 359.3 316.2 C352.9 304.9 346.8 291.3 341.2 280.0 C335.6 268.7 324.3 253.0 325.8 248.3Z" fill="#e88862" opacity="0.9"/>
<path d="M381.9 344.5 C378.1 351.8 367.6 374.8 359.3 388.6 C351.0 402.3 340.4 417.2 332.1 427.0 C323.8 436.8 313.3 444.0 309.5 447.4" fill="none" stroke="#f0a070" stroke-width="1.2" opacity="0.8"/>
<path d="M379.7 393.1 C383.8 382.5 392.9 359.9 395.5 370.5 C398.1 381.0 403.0 442.1 395.5 456.4 C387.9 470.8 354.4 460.2 350.2 456.4 C346.1 452.7 365.7 444.4 370.6 433.8 C375.5 423.3 375.5 403.7 379.7 393.1Z" fill="#f29a52" opacity="0.7"/>
</g>
<g font-family="Liberation Sans, sans-serif">
<defs>
<linearGradient id="igray" x1="0" y1="0" x2="0" y2="1"><stop offset="0" stop-color="#9a9da3"/><stop offset="1" stop-color="#74777d"/></linearGradient>
<linearGradient id="iwht" x1="0" y1="0" x2="0" y2="1"><stop offset="0" stop-color="#ffffff"/><stop offset="1" stop-color="#e6e6ea"/></linearGradient>
<linearGradient id="iyel" x1="0" y1="0" x2="0" y2="1"><stop offset="0" stop-color="#ffd54a"/><stop offset="1" stop-color="#ffb21e"/></linearGradient>
<linearGradient id="iora" x1="0" y1="0" x2="0" y2="1"><stop offset="0" stop-color="#ffb83a"/><stop offset="1" stop-color="#ff9d1c"/></linearGradient>
<linearGradient id="iblu" x1="0" y1="0" x2="0" y2="1"><stop offset="0" stop-color="#2fa2ff"/><stop offset="1" stop-color="#0a6cf0"/></linearGradient>
<linearGradient id="igrn" x1="0" y1="0" x2="0" y2="1"><stop offset="0" stop-color="#2fd36a"/><stop offset="1" stop-color="#0cb04a"/></linearGradient>
<linearGradient id="ired" x1="0" y1="0" x2="0" y2="1"><stop offset="0" stop-color="#ff8050"/><stop offset="1" stop-color="#f45a2e"/></linearGradient>
<linearGradient id="iwea" x1="0" y1="0" x2="1" y2="0"><stop offset="0" stop-color="#1487fb"/><stop offset="1" stop-color="#2ea6ff"/></linearGradient>
<linearGradient id="idrk" x1="0" y1="0" x2="0" y2="1"><stop offset="0" stop-color="#4a4c52"/><stop offset="1" stop-color="#2c2d31"/></linearGradient>
</defs>
<text x="5.4" y="9.2" font-size="6.2" fill="#fff" opacity="0.9">08:45</text>
<g fill="#fff" opacity="0.92"><path d="M344.4 4.2 Q348.6 1.6 352.8 4.2 L348.6 9.2Z" opacity="0.85"/><path d="M354.6 9 L360.2 9 L360.2 3.8Z" opacity="0.8"/><path d="M362.4 9 L368 9 L368 3.8Z" opacity="0.8"/><rect x="370.6" y="4" width="10.6" height="5" rx="0.8"/></g>
<text x="47.6" y="115.9" font-size="34" fill="#fff" textLength="78.5" lengthAdjust="spacingAndGlyphs" stroke="#b1cdfc" stroke-width="0.9" paint-order="fill">08:45</text>
<text x="127.6" y="115.6" font-size="7.2" fill="#fff" opacity="0.9">AM</text>
<text x="49" y="127.4" font-size="8.2" fill="#fff" opacity="0.85">Tue, Feb 06</text>
<rect x="49.5" y="202.8" width="92.8" height="84.6" rx="8.5" fill="#ece8fb" opacity="0.86"/>
<g transform="translate(61.5 211.9)"><rect x="1" y="2.2" width="25.8" height="26.8" rx="6.4" fill="#000" opacity="0.22" filter="url(#ish)"/><rect width="27.8" height="27.8" rx="6.4" fill="url(#igray)"/><path d="M9 6.6 H16.4 L19.4 9.6 V21 H9Z" fill="#f7f7f7"/><rect x="10.8" y="12.6" width="6.8" height="6.6" rx="0.8" fill="#ffc533"/></g>
<g transform="translate(102.4 211.9)"><rect x="1" y="2.2" width="25.8" height="26.8" rx="6.4" fill="#000" opacity="0.22" filter="url(#ish)"/><rect width="27.8" height="27.8" rx="6.4" fill="url(#iora)"/><path d="M13.9 5.6 A6.4 6.4 0 0 1 17.6 17.2 V19.4 H10.2 V17.2 A6.4 6.4 0 0 1 13.9 5.6Z M11 20.6 H16.8 V22.2 H11Z" fill="#fff"/><path d="M14.6 9 L12.2 13.4 H14 L13.2 16.8 L15.9 12.2 H14.1Z" fill="#ffab2a"/></g>
<g transform="translate(61.5 250.1)"><rect x="1" y="2.2" width="25.8" height="26.8" rx="6.4" fill="#000" opacity="0.22" filter="url(#ish)"/><rect width="27.8" height="27.8" rx="6.4" fill="url(#iblu)"/><circle cx="9.6" cy="10.4" r="3.6" fill="none" stroke="#ffb02e" stroke-width="1.7"/><circle cx="9.6" cy="10.4" r="2" fill="none" stroke="#ff5e7a" stroke-width="1"/><path d="M7 20.6 A4.2 4.2 0 0 1 8.4 12.6 A5.6 5.6 0 0 1 18.8 12.2 A4.3 4.3 0 0 1 20 20.6Z" fill="#dff1ff"/></g>
<g transform="translate(102.4 250.1)"><rect x="1" y="2.2" width="25.8" height="26.8" rx="6.4" fill="#000" opacity="0.22" filter="url(#ish)"/><rect width="27.8" height="27.8" rx="6.4" fill="url(#idrk)"/><g fill="none" stroke="#8d9096" stroke-width="1"><circle cx="9.2" cy="9.2" r="3.7"/><circle cx="18.6" cy="9.2" r="3.7"/><circle cx="9.2" cy="18.6" r="3.7"/></g><circle cx="18.6" cy="18.6" r="4.1" fill="#ff7a2e"/><path d="M16.8 18 h3.6 M16.8 19.4 h3.6" stroke="#fff" stroke-width="0.7"/></g>
<text x="95.9" y="296.2" font-size="6.6" text-anchor="middle" fill="#fff" opacity="0.95">Suggestions</text>
<rect x="178.8" y="202.8" width="92.3" height="27.9" rx="7" fill="url(#iwea)"/>
<text x="188.6" y="218.2" font-size="11" fill="#fff" font-weight="700" textLength="17.5" lengthAdjust="spacingAndGlyphs">27°</text><text x="189.8" y="225" font-size="3.8" fill="#fff" opacity="0.75">Sunny</text><circle cx="254" cy="216.4" r="6.6" fill="#ffc933"/><circle cx="257.8" cy="219.2" r="2" fill="#ffe8a0" opacity="0.7"/>
<text x="224.9" y="239.6" font-size="6.6" text-anchor="middle" fill="#fff" opacity="0.95">Weather</text>
<g transform="translate(307.3 202.8)"><rect x="1" y="2.2" width="26.3" height="27.3" rx="6.6" fill="#000" opacity="0.22" filter="url(#ish)"/><rect width="28.3" height="28.3" rx="6.6" fill="url(#iyel)"/><path d="M7.2 21.2 L8.6 16.6 L18.4 6.8 Q19.6 5.8 20.8 7 L21.6 7.8 Q22.6 9 21.6 10 L11.8 19.8Z" fill="#fff"/><path d="M17 8.4 L20 11.4" stroke="#ffc02a" stroke-width="0.8"/></g>
<text x="321.4" y="239.6" font-size="6.6" text-anchor="middle" fill="#fff" opacity="0.95">Notepad</text>
<g transform="translate(178.5 259.5)"><rect x="1" y="2.2" width="26.3" height="27.3" rx="6.6" fill="#000" opacity="0.22" filter="url(#ish)"/><rect width="28.3" height="28.3" rx="6.6" fill="url(#iwht)"/><circle cx="14.15" cy="14.15" r="9.8" fill="#eceef2" stroke="#c9ccd3" stroke-width="1"/><path d="M14.15 14.15 L9.6 10.4 M14.15 14.15 H20.4" stroke="#5a5d66" stroke-width="1.1" stroke-linecap="round"/></g>
<text x="192.7" y="296.2" font-size="6.6" text-anchor="middle" fill="#fff" opacity="0.95">Clock</text>
<g transform="translate(242.8 259.5)"><rect x="1" y="2.2" width="26.3" height="27.3" rx="6.6" fill="#000" opacity="0.22" filter="url(#ish)"/><rect width="28.3" height="28.3" rx="6.6" fill="url(#iwht)"/><text x="14.15" y="17.6" font-size="13.5" text-anchor="middle" fill="#33353b" font-weight="700">7</text><rect x="7.6" y="20.8" width="13.2" height="2.2" rx="1.1" fill="#f0465a"/></g>
<text x="256.9" y="296.2" font-size="6.6" text-anchor="middle" fill="#fff" opacity="0.95">Calendar</text>
<g transform="translate(307.3 259.5)"><rect x="1" y="2.2" width="26.3" height="27.3" rx="6.6" fill="#000" opacity="0.22" filter="url(#ish)"/><rect width="28.3" height="28.3" rx="6.6" fill="url(#iwht)"/><g stroke-linecap="round" stroke-width="1.3"><path d="M6.4 12.6 V15.8 M9.4 10.6 V17.8 M19 10.6 V17.8 M22 12.6 V15.8" stroke="#8a8d96"/><path d="M16 9 V19.4" stroke="#8a8d96"/><path d="M12.6 7 V21.4" stroke="#f0465a" stroke-width="1.7"/></g></g>
<text x="321.4" y="296.2" font-size="6.6" text-anchor="middle" fill="#fff" opacity="0.95">Sound Recorder</text>
<g transform="translate(49.5 315.6)"><rect x="1" y="2.2" width="26.3" height="27.3" rx="6.6" fill="#000" opacity="0.22" filter="url(#ish)"/><rect width="28.3" height="28.3" rx="6.6" fill="url(#iwht)"/><path d="M6 10 Q6 8.4 7.6 8.4 H12 L13.8 10.2 H20.6 Q22.2 10.2 22.2 11.8 V19.4 Q22.2 21 20.6 21 H7.6 Q6 21 6 19.4Z" fill="#ff9a1e"/><path d="M6 13.4 Q6 12.2 7.4 12.2 H20.8 Q22.2 12.2 22.2 13.4 V19.4 Q22.2 21 20.6 21 H7.6 Q6 21 6 19.4Z" fill="#ffc247"/></g>
<text x="63.6" y="352.6" font-size="6.6" text-anchor="middle" fill="#fff" opacity="0.95">File Manager</text>
<g transform="translate(114.0 315.6)"><rect x="1" y="2.2" width="26.3" height="27.3" rx="6.6" fill="#000" opacity="0.22" filter="url(#ish)"/><rect width="28.3" height="28.3" rx="6.6" fill="url(#igray)"/><path d="M13.12 6.72 L13.32 4.79 L14.98 4.79 L15.18 6.72 L17.68 7.53 L18.99 6.09 L20.32 7.06 L19.35 8.75 L20.90 10.87 L22.80 10.47 L23.31 12.04 L21.53 12.84 L21.53 15.46 L23.31 16.26 L22.80 17.83 L20.90 17.43 L19.35 19.55 L20.32 21.24 L18.99 22.21 L17.68 20.77 L15.18 21.58 L14.98 23.51 L13.32 23.51 L13.12 21.58 L10.62 20.77 L9.31 22.21 L7.98 21.24 L8.95 19.55 L7.40 17.43 L5.50 17.83 L4.99 16.26 L6.77 15.46 L6.77 12.84 L4.99 12.04 L5.50 10.47 L7.40 10.87 L8.95 8.75 L7.98 7.06 L9.31 6.09 L10.62 7.53Z M8.85 14.15 a5.3 5.3 0 1 0 10.6 0 a5.3 5.3 0 1 0 -10.6 0Z" fill="#fff" fill-rule="evenodd"/><path d="M14.15 14.15 V8.55 M14.15 14.15 L9.25 16.95 M14.15 14.15 L19.05 16.95" stroke="#fff" stroke-width="1.3"/><circle cx="14.15" cy="14.15" r="1.3" fill="#fff"/></g>
<text x="128.2" y="352.6" font-size="6.6" text-anchor="middle" fill="#fff" opacity="0.95">Settings</text>
<g transform="translate(178.5 315.6)"><rect x="1" y="2.2" width="26.3" height="27.3" rx="6.6" fill="#000" opacity="0.22" filter="url(#ish)"/><rect width="28.3" height="28.3" rx="6.6" fill="url(#iwht)"/><path d="M5.4 14.6 Q5 8.4 13 7.2 Q21.6 6 23 13 Q24 20.4 15.6 21.4 Q6.2 22.2 5.4 14.6Z" fill="#7a6cf0"/><path d="M8 15 Q8 10 14 9.4 Q20.4 9 21 14 Q21.4 19 15 19.4 Q8.4 19.6 8 15Z" fill="#9a8af8"/><path d="M10.4 13.4 V15.6 M12.4 12.2 V16.8 M14.4 11 V18 M16.4 12.2 V16.8 M18.4 13.4 V15.6" stroke="#fff" stroke-width="0.8" stroke-linecap="round"/><path d="M19 8 Q23.6 10 23 16" fill="none" stroke="#38b6f8" stroke-width="1.6"/></g>
<text x="192.7" y="352.6" font-size="6.6" text-anchor="middle" fill="#fff" opacity="0.95">Ella</text>
<g transform="translate(242.8 315.6)"><rect x="1" y="2.2" width="26.3" height="27.3" rx="6.6" fill="#000" opacity="0.22" filter="url(#ish)"/><rect width="28.3" height="28.3" rx="6.6" fill="url(#iblu)"/><path d="M12 11.6 H21 Q22.4 11.6 22.4 13 V19 Q22.4 20.4 21 20.4 V22.6 L18.6 20.4 H12 Q10.6 20.4 10.6 19 V13 Q10.6 11.6 12 11.6Z" fill="#9fd2ff"/><path d="M7.2 6.6 H17.4 Q18.8 6.6 18.8 8 V14.6 Q18.8 16 17.4 16 H10.4 L7.8 18.4 V16 H7.2 Q5.8 16 5.8 14.6 V8 Q5.8 6.6 7.2 6.6Z" fill="#fff"/></g>
<text x="256.9" y="352.6" font-size="6.6" text-anchor="middle" fill="#fff" opacity="0.95">Messages</text>
<g transform="translate(307.3 315.6)"><rect x="1" y="2.2" width="26.3" height="27.3" rx="6.6" fill="#000" opacity="0.22" filter="url(#ish)"/><rect width="28.3" height="28.3" rx="6.6" fill="url(#igrn)"/><circle cx="14.15" cy="14.15" r="7.4" fill="none" stroke="#fff" stroke-width="3.4" stroke-dasharray="38.5 8" transform="rotate(8 14.15 14.15)"/><circle cx="14.15" cy="14.15" r="3" fill="#bff5d2" opacity="0.9"/></g>
<text x="321.4" y="352.6" font-size="6.6" text-anchor="middle" fill="#fff" opacity="0.95">42%</text>
<circle cx="179.3" cy="372.3" r="1.4" fill="#fff" opacity="0.35"/>
<circle cx="188.6" cy="372.3" r="1.9" fill="#fff" opacity="1"/>
<circle cx="198.2" cy="372.3" r="1.4" fill="#fff" opacity="0.35"/>
<circle cx="207.6" cy="372.3" r="1.4" fill="#fff" opacity="0.35"/>
<rect x="32" y="385.1" width="321.7" height="42.6" rx="10" fill="#fff" opacity="0.2"/>
<g transform="translate(49.5 392.5)"><rect x="1" y="2.2" width="26.3" height="27.3" rx="6.6" fill="#000" opacity="0.22" filter="url(#ish)"/><rect width="28.3" height="28.3" rx="6.6" fill="url(#igrn)"/><path d="M9 7.6 Q10.6 6.4 11.6 8 L12.9 10.4 Q13.5 11.6 12.4 12.5 L11.6 13.2 Q13.2 16.6 16.4 18 L17.2 17 Q18.2 16 19.4 16.8 L21.6 18.2 Q22.8 19.2 21.6 20.6 Q19.6 22.8 16 21 Q10.4 18 8 12.6 Q7.2 9.4 9 7.6Z" fill="#fff"/></g>
<g transform="translate(114.0 392.5)"><rect x="1" y="2.2" width="26.3" height="27.3" rx="6.6" fill="#000" opacity="0.22" filter="url(#ish)"/><rect width="28.3" height="28.3" rx="6.6" fill="url(#ired)"/><circle cx="14.15" cy="10.6" r="3.7" fill="#fff"/><path d="M6.8 21.6 Q7.2 15.8 14.15 15.8 Q21.1 15.8 21.5 21.6 Q21.5 22.4 20.6 22.4 H7.7 Q6.8 22.4 6.8 21.6Z" fill="#fff"/></g>
<g transform="translate(178.5 392.5)"><rect x="1" y="2.2" width="26.3" height="27.3" rx="6.6" fill="#000" opacity="0.22" filter="url(#ish)"/><rect width="28.3" height="28.3" rx="6.6" fill="url(#igray)"/><circle cx="14.15" cy="14.6" r="9" fill="#55585f"/><circle cx="14.15" cy="14.6" r="7" fill="#1d1e22"/><circle cx="14.15" cy="14.6" r="4" fill="#34363c"/><circle cx="14.15" cy="14.6" r="2" fill="#0c0c0e"/><circle cx="12.4" cy="12.6" r="1" fill="#8a8d96"/><circle cx="23" cy="5.2" r="1.1" fill="#ffc933"/></g>
<g transform="translate(242.8 392.5)"><rect x="1" y="2.2" width="26.3" height="27.3" rx="6.6" fill="#000" opacity="0.22" filter="url(#ish)"/><rect width="28.3" height="28.3" rx="6.6" fill="url(#iwht)"/><path d="M14.15 14.15 Q8 13 6.6 7.6 Q12.6 6.6 14.15 14.15Z" fill="#ff8a3a"/><path d="M14.15 14.15 Q15.4 7.4 21.6 7.2 Q21.8 13 14.15 14.15Z" fill="#3a8cf5"/><path d="M14.15 14.15 Q20.6 15.2 21.6 21 Q15.2 21.6 14.15 14.15Z" fill="#2fb6f0"/><path d="M14.15 14.15 Q13 21 6.8 21.2 Q6.8 15.2 14.15 14.15Z" fill="#e83aa8"/><path d="M14.15 14.15 Q10 10 12 6.8 Q16 8 14.15 14.15Z" fill="#ffc23a" opacity="0.9"/><path d="M14.15 14.15 Q18.4 18 16.4 21.6 Q12.6 20 14.15 14.15Z" fill="#7a5cf0" opacity="0.9"/></g>
<g transform="translate(307.3 392.5)"><rect x="1" y="2.2" width="26.3" height="27.3" rx="6.6" fill="#000" opacity="0.22" filter="url(#ish)"/><rect width="28.3" height="28.3" rx="6.6" fill="url(#iblu)"/><circle cx="14.15" cy="14.15" r="7" fill="#e8f4ff"/><path d="M4.6 18.4 Q3.4 15.8 9 12.6 L9.4 14 Q6.4 16.2 6.8 17 Q7.6 17.8 13 15.6 Q19 12.8 21.4 10.6 Q22 10 21.6 9.6 Q21 9 18.6 9.8 L18 8.6 Q22.6 6.8 23.6 8.8 Q24.6 10.8 19.4 14.4 Q14 17.8 9.4 19 Q5.4 19.8 4.6 18.4Z" fill="#bfe0ff"/></g>
</g>
</symbol>
<g id="paint">
<defs>
<linearGradient id="psky" x1="0" y1="0" x2="0" y2="1"><stop offset="0" stop-color="#dfd0f5"/><stop offset="0.2" stop-color="#ead5f6"/><stop offset="0.42" stop-color="#f8daf0"/><stop offset="0.62" stop-color="#fbd3e0"/><stop offset="0.82" stop-color="#fac6c8"/><stop offset="1" stop-color="#f8c0b8"/></linearGradient>
<radialGradient id="pskl" cx="0" cy="1" r="1"><stop offset="0" stop-color="#f7bba4" stop-opacity="0.95"/><stop offset="0.45" stop-color="#f8bfae" stop-opacity="0.6"/><stop offset="1" stop-color="#f8c2b6" stop-opacity="0"/></radialGradient>
<radialGradient id="psun" cx="0.3" cy="0.58" r="0.8"><stop offset="0" stop-color="#fdfde0"/><stop offset="0.5" stop-color="#fcf9cc"/><stop offset="0.8" stop-color="#f9ecc0"/><stop offset="0.94" stop-color="#f9d6bc"/><stop offset="1" stop-color="#f8bfb4"/></radialGradient>
<linearGradient id="pmt" x1="0" y1="0" x2="1" y2="0"><stop offset="0" stop-color="#524c8a"/><stop offset="0.3" stop-color="#58528f"/><stop offset="0.55" stop-color="#474279"/><stop offset="0.8" stop-color="#4f4a84"/><stop offset="1" stop-color="#615b9c"/></linearGradient>
<linearGradient id="pmr" x1="0" y1="0" x2="1" y2="0.6"><stop offset="0" stop-color="#6f68a8" stop-opacity="0"/><stop offset="0.5" stop-color="#7c75b6" stop-opacity="0.9"/><stop offset="1" stop-color="#7a73b4"/></linearGradient>
<linearGradient id="pwat" x1="0" y1="0" x2="0" y2="1"><stop offset="0" stop-color="#8f80b8"/><stop offset="0.22" stop-color="#c4a6cc"/><stop offset="0.5" stop-color="#c9b0d6"/><stop offset="1" stop-color="#b6ace4"/></linearGradient>
<linearGradient id="pref" x1="0" y1="0" x2="0" y2="1"><stop offset="0" stop-color="#e25078"/><stop offset="0.2" stop-color="#f58a92"/><stop offset="0.42" stop-color="#fbc2ac"/><stop offset="0.6" stop-color="#fbd8bf"/><stop offset="0.82" stop-color="#f9b6b8"/><stop offset="1" stop-color="#f3b8c4" stop-opacity="0"/></linearGradient>
<filter id="pb2" x="-10%" y="-30%" width="120%" height="160%"><feGaussianBlur stdDeviation="2.6"/></filter>
<filter id="pb1" x="-10%" y="-10%" width="120%" height="120%"><feGaussianBlur stdDeviation="1.2"/></filter>
<filter id="pb4" x="-20%" y="-20%" width="140%" height="140%"><feGaussianBlur stdDeviation="4.2"/></filter>
<filter id="pb5" x="-30%" y="-30%" width="160%" height="160%"><feGaussianBlur stdDeviation="5"/></filter>
</defs>
<rect x="-30" y="-20" width="360" height="312" fill="url(#psky)"/>
<rect x="-30" y="100" width="250" height="192" fill="url(#pskl)"/>
<circle cx="144.2" cy="184.4" r="32" fill="#fde6dc" opacity="0.5" filter="url(#pb1)"/>
<circle cx="144.2" cy="184.4" r="29.05" fill="url(#psun)"/>
<rect x="-30" y="284" width="360" height="176" fill="url(#pwat)"/>
<path d="M-30 288 L330 288 L330 297 L268 307 L231 320 L187 332 L150 337 L107 332 L86 320 L30 307 L-30 299Z" fill="#4b4987" filter="url(#pb2)"/>
<path d="M60 296 L240 296 L200 318 L150 326 L100 318Z" fill="#45437f" filter="url(#pb2)"/>
<rect x="115.5" y="327" width="59" height="82" fill="url(#pref)" filter="url(#pb1)"/>
<path d="M108 333 h30 M150 335.2 h34" stroke="#b9a0cf" stroke-width="0.9" opacity="0.55"/>
<path d="M111 338.5 h37 M144 340.7 h29" stroke="#b9a0cf" stroke-width="0.9" opacity="0.55"/>
<path d="M114 344 h44 M150 346.2 h24" stroke="#b9a0cf" stroke-width="0.9" opacity="0.55"/>
<path d="M108 351 h51 M144 353.2 h33" stroke="#b9a0cf" stroke-width="0.9" opacity="0.55"/>
<path d="M111 358 h36 M150 360.2 h28" stroke="#b9a0cf" stroke-width="0.9" opacity="0.55"/>
<path d="M114 366 h43 M144 368.2 h23" stroke="#b9a0cf" stroke-width="0.9" opacity="0.55"/>
<path d="M108 374 h50 M150 376.2 h32" stroke="#b9a0cf" stroke-width="0.9" opacity="0.55"/>
<path d="M111 383 h35 M144 385.2 h27" stroke="#b9a0cf" stroke-width="0.9" opacity="0.55"/>
<path d="M114 392 h42 M150 394.2 h22" stroke="#b9a0cf" stroke-width="0.9" opacity="0.55"/>
<path d="M20 300 h250" stroke="#5a5696" stroke-width="1.1" opacity="0.50" filter="url(#pb1)"/>
<path d="M42 306 h206" stroke="#5a5696" stroke-width="1.1" opacity="0.45" filter="url(#pb1)"/>
<path d="M64 312 h162" stroke="#5a5696" stroke-width="1.1" opacity="0.40" filter="url(#pb1)"/>
<path d="M86 318 h118" stroke="#5a5696" stroke-width="1.1" opacity="0.35" filter="url(#pb1)"/>
<path d="M108 324 h74" stroke="#5a5696" stroke-width="1.1" opacity="0.30" filter="url(#pb1)"/>
<path d="M130 330 h30" stroke="#5a5696" stroke-width="1.1" opacity="0.25" filter="url(#pb1)"/>
<path d="M-30.0 268.0 C-25.0 265.8 -9.6 259.1 0.0 254.9 C9.6 250.7 18.9 246.8 27.5 242.8 C36.1 238.8 44.1 233.3 51.7 230.7 C59.3 228.1 66.1 230.1 73.3 227.2 C80.5 224.3 88.1 217.3 94.8 213.2 C101.5 209.1 108.1 204.7 113.6 202.4 C119.0 200.1 122.1 199.3 127.5 199.3 C132.9 199.3 139.8 201.4 146.0 202.4 C152.2 203.4 158.6 205.1 164.4 205.5 C170.2 205.9 175.7 205.1 181.0 204.8 C186.3 204.5 191.1 203.4 196.0 203.7 C200.9 204.0 204.9 204.1 210.5 206.6 C216.1 209.1 221.8 213.5 229.4 218.6 C237.0 223.7 245.9 231.0 256.3 237.4 C266.7 243.8 279.5 250.4 291.8 256.8 C304.1 263.2 323.6 272.8 330.0 276.0 L330 292 L-30 292Z" fill="url(#pmt)"/>
<path d="M-30.0 268.0 C-25.0 265.8 -9.6 259.1 0.0 254.9 C9.6 250.7 18.9 246.8 27.5 242.8 C36.1 238.8 44.1 233.3 51.7 230.7 C59.3 228.1 66.1 230.1 73.3 227.2 C80.5 224.3 88.1 217.3 94.8 213.2 C101.5 209.1 108.1 204.7 113.6 202.4 C119.0 200.1 122.1 199.3 127.5 199.3 C132.9 199.3 139.8 201.4 146.0 202.4 C152.2 203.4 158.6 205.1 164.4 205.5 C170.2 205.9 175.7 205.1 181.0 204.8 C186.3 204.5 191.1 203.4 196.0 203.7 C200.9 204.0 204.9 204.1 210.5 206.6 C216.1 209.1 221.8 213.5 229.4 218.6 C237.0 223.7 245.9 231.0 256.3 237.4 C266.7 243.8 279.5 250.4 291.8 256.8 C304.1 263.2 323.6 272.8 330.0 276.0" fill="none" stroke="#34327a" stroke-width="0.7"/>
<path d="M197.1 203.0 C196.8 200.4 205.1 203.8 210.5 206.4 C215.9 209.0 221.8 213.4 229.4 218.6 C237.0 223.8 245.9 231.0 256.3 237.4 C266.7 243.8 279.5 250.4 291.8 256.8 C304.1 263.2 323.6 270.1 330.0 276.0 C336.4 281.9 336.7 289.7 330.0 292.0 C323.3 294.3 301.3 295.0 290.0 290.0 C278.7 285.0 271.2 270.3 262.0 262.0 C252.8 253.7 243.3 246.7 235.0 240.0 C226.7 233.3 218.3 228.2 212.0 222.0 C205.7 215.8 197.3 205.6 197.1 203.0Z" fill="url(#pmr)" filter="url(#pb1)"/>
<path d="M75 228 L96 214 Q112 240 128 262 Q140 280 150 292 L104 292 Q92 262 75 228Z" fill="#6d66a6" opacity="0.85" filter="url(#pb4)"/>
<path d="M30 244 Q52 232 72 230 Q70 256 52 280 L20 290 Q22 262 30 244Z" fill="#474279" opacity="0.7" filter="url(#pb4)"/>
<path d="M118 206 Q130 200 150 204 Q190 206 205 212 Q228 240 246 286 L178 292 Q150 250 118 206Z" fill="#423d77" opacity="0.75" filter="url(#pb4)"/>
<path d="M214 258 Q250 266 286 292 L236 292Z" fill="#3b3770" opacity="0.75" filter="url(#pb4)"/>
<path d="M-30 272 Q10 264 36 270 L50 292 L-30 292Z" fill="#48447e" opacity="0.6" filter="url(#pb4)"/>
<rect x="-30" y="280" width="360" height="12" fill="#4f4b89" opacity="0.8" filter="url(#pb1)"/>
</g>
<g id="ppanel" font-family="Liberation Sans, sans-serif">
<defs>
<linearGradient id="phue" x1="0" y1="0" x2="1" y2="0"><stop offset="0" stop-color="#ff40ff"/><stop offset="0.1" stop-color="#ff00c0"/><stop offset="0.17" stop-color="#ff0000"/><stop offset="0.33" stop-color="#ffff00"/><stop offset="0.48" stop-color="#00e000"/><stop offset="0.64" stop-color="#00ffff"/><stop offset="0.8" stop-color="#0040ff"/><stop offset="0.86" stop-color="#4000ff"/><stop offset="1" stop-color="#ff40ff"/></linearGradient>
<linearGradient id="pwh" x1="0" y1="0" x2="0" y2="1"><stop offset="0" stop-color="#fff"/><stop offset="0.5" stop-color="#fff" stop-opacity="0"/><stop offset="1" stop-color="#000" stop-opacity="0.18"/></linearGradient>
<linearGradient id="psw" x1="0" y1="0" x2="1" y2="0"><stop offset="0" stop-color="#d02030"/><stop offset="0.2" stop-color="#e040a0"/><stop offset="0.38" stop-color="#8040c0"/><stop offset="0.55" stop-color="#2050c8"/><stop offset="0.72" stop-color="#20a8d0"/><stop offset="0.88" stop-color="#20a060"/><stop offset="1" stop-color="#d0d020"/></linearGradient>
<pattern id="pdg" width="4.2" height="4.2" patternUnits="userSpaceOnUse" patternTransform="rotate(28)"><rect width="4.2" height="1.5" fill="#fff" opacity="0.45"/><rect y="2.6" width="4.2" height="1.6" fill="#000" opacity="0.3"/></pattern>
<linearGradient id="phg" x1="0" y1="0" x2="0" y2="1"><stop offset="0.7" stop-color="#fff"/><stop offset="1" stop-color="#cfcfcf"/></linearGradient>
</defs>
<rect x="291.8" y="-80" width="120" height="620" fill="#5a5a5a"/>
<rect x="294.8" y="46.3" width="84.8" height="24.7" fill="url(#phg)"/>
<path d="M306.1 71.0 L309.6 61.1 L314.4 49.5 L319.8 45.5 L324.1 48.4 L329.5 56.5 L334.9 60.0 L341.9 57.6 L348.9 56.2 L354.3 59.7 L360.2 65.7 L365.3 71.0Z" fill="#000"/>
<rect x="292" y="71" width="90" height="1" fill="#4a4a4a"/>
<rect x="295.2" y="80.2" width="84" height="0.6" fill="#757575"/><rect x="312.8" y="79.4" width="9.4" height="2.2" fill="#f2f2f2"/>
<rect x="295.2" y="89.3" width="84" height="0.6" fill="#757575"/><rect x="341.9" y="88.5" width="9.4" height="2.2" fill="#f2f2f2"/>
<rect x="295.2" y="98.2" width="84" height="0.6" fill="#757575"/><rect x="324.4" y="97.4" width="10.0" height="2.2" fill="#f2f2f2"/>
<rect x="292" y="109.2" width="90" height="0.7" fill="#6c6c6c"/>
<text x="298" y="120.4" font-size="6.6" fill="#f0f0f0" textLength="60.6" lengthAdjust="spacingAndGlyphs" word-spacing="1.5">COLOR SWATCHES</text>
<rect x="296.1" y="127" width="84" height="39.1" fill="url(#phue)"/><rect x="296.1" y="127" width="84" height="39.1" fill="url(#pwh)"/>
<rect x="297.2" y="169.6" width="82.4" height="17.2" fill="url(#psw)"/><rect x="297.2" y="169.6" width="82.4" height="17.2" fill="url(#pdg)"/><rect x="297.2" y="169.6" width="82.4" height="17.2" fill="none" stroke="#3c3c3c" stroke-width="0.7"/>
<rect x="298.8" y="196.2" width="80.2" height="0.6" fill="#7a7a7a"/><rect x="311.8" y="194.3" width="8.4" height="4.4" rx="1" fill="#f4f4f4"/><rect x="314" y="195.7" width="4" height="1.6" fill="#555"/>
<rect x="298.8" y="207.5" width="80.2" height="0.6" fill="#7a7a7a"/><rect x="324.2" y="205.60000000000002" width="8.4" height="4.4" rx="1" fill="#f4f4f4"/><rect x="326.4" y="207.0" width="4" height="1.6" fill="#555"/>
<rect x="298.8" y="218.2" width="80.2" height="0.6" fill="#7a7a7a"/><rect x="350.6" y="216.3" width="8.4" height="4.4" rx="1" fill="#f4f4f4"/><rect x="352.8" y="217.7" width="4" height="1.6" fill="#555"/>
<rect x="292" y="231.2" width="90" height="0.7" fill="#6a6a6a"/>
<text x="300.2" y="241" font-size="6.8" fill="#f0f0f0" textLength="20.7" lengthAdjust="spacingAndGlyphs">LAYER</text>
<text x="330.3" y="240" font-size="3.2" fill="#d0d0d0">Opacity</text><rect x="343.2" y="236" width="12.2" height="4.7" rx="0.6" fill="#f4f4f4"/><rect x="346.4" y="237.6" width="5.6" height="1.6" fill="#666"/><text x="357.4" y="240" font-size="3.2" fill="#d0d0d0">%</text>
<rect x="300.7" y="246.3" width="72.7" height="30.1" fill="none" stroke="#4c4c4c" stroke-width="0.7"/><path d="M300.7 256.3 h72.7 M300.7 266.3 h72.7" stroke="#4c4c4c" stroke-width="0.7"/>
<g opacity="1"><path d="M303.8 251.7 Q307.4 248.7 311 251.7 Q307.4 254.7 303.8 251.7Z" fill="none" stroke="#e8e8e8" stroke-width="0.7"/><circle cx="307.4" cy="251.7" r="1.1" fill="#e8e8e8"/><text x="315" y="253.1" font-size="4" fill="#e0e0e0">background</text></g>
<g opacity="0.55"><path d="M303.8 261.4 Q307.4 258.4 311 261.4 Q307.4 264.4 303.8 261.4Z" fill="none" stroke="#e8e8e8" stroke-width="0.7"/><circle cx="307.4" cy="261.4" r="1.1" fill="#e8e8e8"/><text x="315" y="262.79999999999995" font-size="4" fill="#e0e0e0">text</text></g>
<g opacity="0.55"><path d="M303.8 271.1 Q307.4 268.1 311 271.1 Q307.4 274.1 303.8 271.1Z" fill="none" stroke="#e8e8e8" stroke-width="0.7"/><circle cx="307.4" cy="271.1" r="1.1" fill="#e8e8e8"/><text x="315" y="272.5" font-size="4" fill="#e0e0e0">layer1</text></g>
</g>
<g id="ptools" font-family="Liberation Sans, sans-serif">
<rect x="1.1" y="44.4" width="20.5" height="208.6" fill="#505050" stroke="#636363" stroke-width="0.6"/>
<path d="M7.300000000000001 54.8 l1.4 -0.6 l1.2 1.4 v-5 q0.7 -0.9 1.4 0 v2.6 q0.7 -0.8 1.4 0 v0.5 q0.7 -0.7 1.3 0 v0.7 q0.7 -0.6 1.2 0 v3.6 q-0.4 2.6 -2.6 2.8 h-1.8 q-1.2 -0.2 -2 -1.8z" fill="#f4f4f4"/>
<circle cx="12.1" cy="71.5" r="2.7" fill="none" stroke="#f4f4f4" stroke-width="1.2"/><path d="M10.1 73.5 l-3 3" stroke="#f4f4f4" stroke-width="1.5" stroke-linecap="round"/>
<path d="M8.100000000000001 94.9 q-0.4 -5 5.8 -8.6 q0.4 5.4 -3.6 7.2 z" fill="#f4f4f4"/>
<rect x="5.9" y="107.39999999999999" width="10" height="5.4" rx="0.6" fill="none" stroke="#f4f4f4" stroke-width="1"/>
<ellipse cx="10.9" cy="128.4" rx="5" ry="3.2" fill="none" stroke="#f4f4f4" stroke-width="1"/>
<text x="10.9" y="150.1" font-size="9.6" font-weight="700" text-anchor="middle" fill="#f4f4f4">A</text>
<text x="10.9" y="168.9" font-size="10.5" font-style="italic" font-weight="700" font-family="Liberation Serif, serif" text-anchor="middle" fill="#f4f4f4">i</text>
<path d="M6.5 182.7 l4 3 l-4 3 M15.3 182.7 l-4 3 l4 3" fill="none" stroke="#f4f4f4" stroke-width="1.1"/>
<path d="M8.3 201.20000000000002 q2.6 -2.6 5 -0.6 l0.8 -1 v3 h-3 l1 -1 q-1.6 -1 -3 0.4z M13.5 203.8 q-2.6 2.6 -5 0.6 l-0.8 1 v-3 h3 l-1 1 q1.6 1 3 -0.4z" fill="#f4f4f4"/>
<rect x="9.9" y="220.2" width="6" height="6" fill="#1e1e1e" stroke="#e8e8e8" stroke-width="0.6"/><rect x="5.7" y="216.2" width="6.4" height="6.4" fill="#1ea0f0" stroke="#e8e8e8" stroke-width="0.5"/>
<rect x="5.7" y="238.1" width="10.4" height="5.6" rx="0.6" fill="none" stroke="#8a8a8a" stroke-width="0.8"/><path d="M8.3 240.9 h5.2" stroke="#8a8a8a" stroke-width="0.8"/>
</g>
</svg>
<svg class="abs" style="left:0;top:1580px" width="540" height="730" viewBox="0 1580 540 730">
<defs>
<linearGradient id="lsil" x1="0" y1="0" x2="0" y2="1"><stop offset="0" stop-color="#9a9a9a"/><stop offset="0.12" stop-color="#e2e2e2"/><stop offset="0.6" stop-color="#cfcfcf"/><stop offset="1" stop-color="#a2a2a2"/></linearGradient>
<linearGradient id="ldrk" x1="0" y1="0" x2="0" y2="1"><stop offset="0" stop-color="#454545"/><stop offset="0.5" stop-color="#333"/><stop offset="1" stop-color="#1e1e1e"/></linearGradient>
<linearGradient id="lrim" x1="0" y1="0" x2="0" y2="1"><stop offset="0" stop-color="#dcdcdc"/><stop offset="0.5" stop-color="#e8e8e8"/><stop offset="0.97" stop-color="#d0d0d0"/><stop offset="1" stop-color="#555"/></linearGradient>
<linearGradient id="lsky" x1="0" y1="0" x2="0" y2="1"><stop offset="0" stop-color="#1c2332"/><stop offset="0.5" stop-color="#2b3342"/><stop offset="1" stop-color="#4d5565"/></linearGradient>
<linearGradient id="ldun" x1="0" y1="0" x2="0" y2="1"><stop offset="0" stop-color="#1d2530"/><stop offset="0.15" stop-color="#141b25"/><stop offset="1" stop-color="#10161f"/></linearGradient>
<linearGradient id="ldu2" x1="0" y1="0" x2="0.3" y2="1"><stop offset="0" stop-color="#46536a"/><stop offset="0.5" stop-color="#354156"/><stop offset="1" stop-color="#252f40"/></linearGradient>
<linearGradient id="lblu" x1="0" y1="0" x2="1" y2="0"><stop offset="0" stop-color="#0a6fc0"/><stop offset="0.7" stop-color="#1f90dc"/><stop offset="1" stop-color="#1a4a78"/></linearGradient>
<linearGradient id="ltb" x1="0" y1="0" x2="1" y2="0"><stop offset="0" stop-color="#dfe6f6"/><stop offset="0.35" stop-color="#dde6f8"/><stop offset="0.6" stop-color="#e6f0fc"/><stop offset="1" stop-color="#e2eafa"/></linearGradient>
<pattern id="ltex" width="9" height="5" patternUnits="userSpaceOnUse" patternTransform="rotate(-14)"><rect width="9" height="1.1" fill="#fff" opacity="0.05"/><rect y="2.6" width="9" height="1" fill="#000" opacity="0.12"/></pattern>
<clipPath id="cl1"><rect x="-10" y="1614.5" width="429.1" height="622.9"/></clipPath>
<clipPath id="cl1w"><rect x="-60" y="1680.6" width="423.6" height="478.1"/></clipPath>
</defs>
<!-- base -->
<rect x="-10" y="2273.6" width="530" height="13" fill="url(#lsil)"/>
<rect x="-10" y="2286.2" width="530" height="11" fill="url(#ldrk)"/>
<path d="M222.5 2290.6 q4 -0.3 4.4 -1.6 q0.4 1.3 4.4 1.6z" fill="#b8b8b8"/>
<!-- lid -->
<path d="M-10 1594.1 H410 Q436.3 1594.1 436.3 1620.4 V2257 Q436.3 2271.6 421.8 2271.6 H-10Z" fill="url(#lrim)"/>
<path d="M-10 1596.2 H409.8 Q434.2 1596.2 434.2 1620.3 V2256.6 Q434.2 2270.4 420.4 2270.4 H-10Z" fill="#272727"/>
<rect x="-10" y="2269.4" width="349" height="4.6" fill="#8d8d8d"/>
<circle cx="21.7" cy="1606.2" r="1.1" fill="#9aa0b0"/>
<!-- display -->
<g clip-path="url(#cl1)">
 <rect x="-10" y="1614.5" width="430" height="207" fill="url(#lsky)"/>
 <path d="M-10 1812 L364 1820.6 L419.1 1824.4 V2238 H-10Z" fill="url(#ldun)"/>
 <path d="M364 1821 L419.1 1824.6 V1840 Q392 1832 364 1834Z" fill="#2a3340" opacity="0.8"/>
 <path d="M364 2037 L419.1 2069.5 V2238 H-10 V2190 H364Z" fill="url(#ldu2)"/>
 <path d="M364 2037 L419.1 2069.5 V2238 H-10 V2190 H364Z" fill="url(#ltex)"/>
 <path d="M150 2238 Q170 2205 205 2188 H160 Q150 2210 120 2238Z" fill="#141b26"/>
 <path d="M-10 2186 H160 Q150 2212 118 2238 H-10Z" fill="url(#lblu)"/>
 <path d="M366 1880 q20 -4 40 2 M370 1935 q24 4 46 -3 M372 1985 q18 -5 40 1 M368 1858 q10 5 30 2" fill="none" stroke="#3a4656" stroke-width="0.8" opacity="0.7"/>
</g>
<!-- window -->
<rect x="-60" y="1650.2" width="423.6" height="30.6" fill="#f0f1f5"/>
<g fill="none" stroke="#39414e" stroke-width="1.1">
 <path d="M302 1665.6 H310"/><rect x="324.6" y="1662.2" width="6.2" height="6.8" rx="0.8"/><path d="M346 1662 L352.6 1669.2 M352.6 1662 L346 1669.2"/>
</g>
<path d="M284.6 1661 l3.4 3.4 l-1 1 l-0.6 -0.5 l-1.7 1.7 q0.3 1.6 -0.8 2.7 l-2 -2 l-2.6 2.7 l-0.4 -0.4 l2.7 -2.6 l-2 -2 q1.1 -1.1 2.7 -0.8 l1.7 -1.7 l-0.5 -0.6z" fill="#39414e"/>
<g clip-path="url(#cl1w)"><use href="#home" x="-53.3" y="1680.6" width="416.9" height="478.1"/></g>
<rect x="-60" y="2158.7" width="423.6" height="32.6" fill="#f1f2f6"/>
<g fill="none" stroke="#4a5160" stroke-width="1.1"><rect x="12.2" y="2170.8" width="8.4" height="8.4" rx="1"/><circle cx="154.8" cy="2175" r="4.6"/><path d="M298.4 2170.2 V2179.8 L289.8 2175Z" stroke-linejoin="round"/></g>
<!-- taskbar -->
<rect x="-10" y="2213.8" width="429.4" height="24" fill="url(#ltb)"/>
<rect x="0" y="2220.6" width="12.6" height="11.6" rx="2" fill="#1b7fd6"/><rect x="4.2" y="2223.2" width="2.8" height="2.8" fill="#f25022"/><rect x="7.6" y="2223.2" width="2.8" height="2.8" fill="#7fba00"/><rect x="4.2" y="2226.6" width="2.8" height="2.8" fill="#00a4ef"/><rect x="7.6" y="2226.6" width="2.8" height="2.8" fill="#ffb900"/>
<g fill="none" stroke="#2e3440" stroke-width="1"><path d="M330.4 2228.6 L333.2 2225.6 L336 2228.6"/><path d="M346.6 2225.6 Q350.2 2222.6 353.8 2225.6 M348 2227.4 Q350.2 2225.6 352.4 2227.4"/></g>
<path d="M350.2 2230.4 l-1.3 -1.6 q1.3 -0.9 2.6 0z" fill="#2e3440"/>
<path d="M359 2225.8 h1.8 l2.4 -2 v7 l-2.4 -2 H359z" fill="#2e3440"/><path d="M364.6 2225 q1.6 2.2 0 4.6" fill="none" stroke="#2e3440" stroke-width="0.8"/>
<rect x="371.8" y="2224.6" width="7.6" height="4.8" rx="0.8" fill="#2e3440"/><rect x="379.6" y="2226" width="1" height="2" fill="#2e3440"/>
<g font-family="Liberation Serif, serif" font-size="5.6" fill="#2e3440"><text x="386.6" y="2225.2" textLength="25.4" lengthAdjust="spacingAndGlyphs">12/20/22</text><text x="386.6" y="2233.2" textLength="25.4" lengthAdjust="spacingAndGlyphs">11:11 AM</text></g>
</svg>
<svg class="abs" style="left:1390px;top:1580px" width="590" height="730" viewBox="1390 1580 590 730">
<defs>
<linearGradient id="rrim" x1="0" y1="0" x2="0" y2="1"><stop offset="0" stop-color="#dcdcdc"/><stop offset="0.5" stop-color="#e8e8e8"/><stop offset="0.97" stop-color="#d0d0d0"/><stop offset="1" stop-color="#555"/></linearGradient>
<linearGradient id="rsky" x1="0" y1="0" x2="0" y2="1"><stop offset="0" stop-color="#19202e"/><stop offset="0.5" stop-color="#262e3c"/><stop offset="1" stop-color="#404a5a"/></linearGradient>
<linearGradient id="rdun" x1="0" y1="0" x2="0" y2="1"><stop offset="0" stop-color="#19212c"/><stop offset="0.12" stop-color="#10171f"/><stop offset="1" stop-color="#0b1118"/></linearGradient>
<linearGradient id="rblu" x1="0" y1="0" x2="1" y2="0.2"><stop offset="0" stop-color="#0c5a98"/><stop offset="0.25" stop-color="#0d7cc8"/><stop offset="1" stop-color="#1c9ae4"/></linearGradient>
<linearGradient id="rtb" x1="0" y1="0" x2="1" y2="0"><stop offset="0" stop-color="#d8e4f6"/><stop offset="0.3" stop-color="#e4eefc"/><stop offset="0.55" stop-color="#d4e0f8"/><stop offset="0.8" stop-color="#dde4fa"/><stop offset="1" stop-color="#d6e2f8"/></linearGradient>
<clipPath id="cr1"><rect x="1497" y="1613.7" width="500" height="623.8"/></clipPath>
<clipPath id="cr1w"><rect x="1575" y="1677" width="326.3" height="475.3"/></clipPath>
<clipPath id="cr1p"><rect x="1901.3" y="1677" width="100" height="475.3"/></clipPath>
</defs>
<!-- base -->
<rect x="1398" y="2270.6" width="600" height="13.8" fill="url(#lsil)"/>
<rect x="1398" y="2284" width="600" height="13" fill="url(#ldrk)"/>
<path d="M1697.6 2288.8 q4 -0.3 4.4 -1.6 q0.4 1.3 4.4 1.6z" fill="#b8b8b8"/>
<!-- lid -->
<path d="M1990 1592.5 H1510.4 Q1483.4 1592.5 1483.4 1619.5 V2253 Q1483.4 2269.8 1499.8 2269.8 H1990Z" fill="url(#rrim)"/>
<path d="M1990 1594.6 H1510.4 Q1485.5 1594.6 1485.5 1619.4 V2252.8 Q1485.5 2269 1501.8 2269 H1990Z" fill="#272727"/>
<rect x="1580" y="2268.8" width="410" height="3.8" fill="#8d8d8d"/>
<circle cx="1899.4" cy="1604.8" r="1.1" fill="#8a90a0"/><circle cx="1961.6" cy="1604.8" r="1.6" fill="#1c1c1c"/>
<!-- display -->
<g clip-path="url(#cr1)">
 <rect x="1497" y="1613.7" width="500" height="190" fill="url(#rsky)"/>
 <rect x="1497" y="1801.5" width="500" height="440" fill="url(#rdun)"/>
 <path d="M1497 1801.5 H1580 V1812 Q1540 1806 1497 1810Z" fill="#222b37" opacity="0.8"/>
 <path d="M1500 1860 q30 -8 70 4 M1510 1912 q20 6 56 0 M1504 1975 q30 -6 66 2 M1520 2040 q24 6 50 0 M1500 2100 q40 -10 74 0" fill="none" stroke="#222c38" stroke-width="1.2" opacity="0.9"/>
 <path d="M1548 1914 l8 -1.4 l4 1.2 l-6 1.4z" fill="#3d5468"/>
 <path d="M1600 2238 Q1640 2196 1650 2170 H1720 Q1720 2200 1752 2238Z" fill="#36465a"/>
 <path d="M1706 2170 Q1712 2204 1742 2238 H2000 V2170Z" fill="url(#rblu)"/>
 <path d="M1700 2170 Q1708 2204 1738 2238 H1752 Q1720 2204 1716 2170Z" fill="#16222e" opacity="0.8"/>
</g>
<!-- window -->
<rect x="1575" y="1647.6" width="420" height="29.6" fill="#f0f1f5"/>
<g fill="none" stroke="#39414e" stroke-width="1.1">
 <path d="M1928.4 1662.4 H1936.2"/><rect x="1950.8" y="1659" width="6.2" height="6.8" rx="0.8"/><path d="M1972 1658.8 L1978.6 1666 M1978.6 1658.8 L1972 1666"/>
</g>
<path d="M1911.2 1657.8 l3.4 3.4 l-1 1 l-0.6 -0.5 l-1.7 1.7 q0.3 1.6 -0.8 2.7 l-2 -2 l-2.6 2.7 l-0.4 -0.4 l2.7 -2.6 l-2 -2 q1.1 -1.1 2.7 -0.8 l1.7 -1.7 l-0.5 -0.6z" fill="#39414e"/>
<g clip-path="url(#cr1w)"><use href="#paint" transform="translate(1583.2 1661.7) scale(1.238)"/></g>
<g clip-path="url(#cr1p)"><use href="#ppanel" transform="translate(1615.9 1725.2) scale(0.978)"/></g>
<use href="#ptools" transform="translate(1573.7 1633.7) scale(0.976)"/>
<rect x="1575" y="2152.3" width="420" height="32.2" fill="#f1f2f6"/>
<g fill="none" stroke="#4a5160" stroke-width="1.1"><rect x="1640.4" y="2164.4" width="8.4" height="8.4" rx="1"/><circle cx="1782.1" cy="2168.6" r="4.6"/><path d="M1925.2 2163.8 V2173.4 L1916.6 2168.6Z" stroke-linejoin="round"/></g>
<!-- taskbar -->
<rect x="1497" y="2213.8" width="500" height="23.7" fill="url(#rtb)"/>
<rect x="1902.6" y="2217.6" width="16.8" height="16.4" rx="2" fill="#f4f8ff" opacity="0.85"/>
<g fill="#1a86e0"><rect x="1905.8" y="2220.6" width="4.8" height="4.8"/><rect x="1911.2" y="2220.6" width="4.8" height="4.8"/><rect x="1905.8" y="2226" width="4.8" height="4.8"/><rect x="1911.2" y="2226" width="4.8" height="4.8"/></g>
<circle cx="1934.2" cy="2224.8" r="3.8" fill="none" stroke="#1e2228" stroke-width="1.5"/><path d="M1931.6 2227.8 L1928 2231.6" stroke="#1e2228" stroke-width="1.8" stroke-linecap="round"/>
<rect x="1951.2" y="2222" width="9" height="8" fill="#f4f4f4" stroke="#888" stroke-width="0.4"/><rect x="1948.6" y="2224.6" width="8" height="7" fill="#23272e"/>
<rect x="1971.4" y="2219.6" width="10" height="11.4" rx="1.4" fill="#1b8ae6"/><rect x="1973.4" y="2221.6" width="3" height="7.4" fill="#dff0ff"/>
</svg>
<svg class="abs" style="left:510px;top:1815px" width="440" height="495" viewBox="510 1815 440 495">
<rect x="931" y="1957" width="3.2" height="59" rx="1.4" fill="#3a3a3a"/><rect x="931" y="2032" width="3.2" height="30" rx="1.4" fill="#3a3a3a"/>
<rect x="519.2" y="1825.9" width="411.9" height="469.2" rx="16.5" fill="#2d2d2d" stroke="url(#fst)" stroke-width="1.3"/>
<rect x="530.6" y="1836.3" width="392.3" height="448.4" rx="11" fill="#0c0c0c"/>
<path d="M718.6 1824.6 l6.6 4.4 l6.6 -4.4z" fill="#000"/><path d="M717.6 1825.9 l7.6 4.8 l7.6 -4.8" fill="none" stroke="#8a8a8a" stroke-width="1.2"/><path d="M709 1833.6 h11 M730.4 1833.6 h11" stroke="#161616" stroke-width="1.6"/>
<path d="M718.6 2296.4 l6.6 -4.4 l6.6 4.4z" fill="#000"/><path d="M717.6 2295.1 l7.6 -4.8 l7.6 4.8" fill="none" stroke="#6a6a6a" stroke-width="1.1"/><path d="M709 2287.6 h11 M730.4 2287.6 h11" stroke="#161616" stroke-width="1.6"/>
<clipPath id="c1"><rect x="532.7" y="1838.4" width="388.1" height="444.2" rx="9.5"/></clipPath>
<g clip-path="url(#c1)"><use href="#home" x="532.7" y="1838.4" width="388.1" height="444.2"/></g>
</svg>
<svg class="abs" style="left:985px;top:1825px" width="430" height="485" viewBox="985 1825 430 485">
<rect x="1400.6" y="1964" width="3.2" height="59" rx="1.4" fill="#3a3a3a"/><rect x="1400.6" y="2038" width="3.2" height="30" rx="1.4" fill="#3a3a3a"/>
<rect x="996.7" y="1836.9" width="404.2" height="459.9" rx="16.5" fill="#2d2d2d" stroke="url(#fst)" stroke-width="1.3"/>
<rect x="1007.7" y="1846.6" width="385.7" height="441.3" rx="11" fill="#0c0c0c"/>
<path d="M1192.1 1835.6 l6.6 4.4 l6.6 -4.4z" fill="#000"/><path d="M1191.1 1836.9 l7.6 4.8 l7.6 -4.8" fill="none" stroke="#8a8a8a" stroke-width="1.2"/><path d="M1182.5 1844.4 h11 M1203.9 1844.4 h11" stroke="#161616" stroke-width="1.6"/>
<path d="M1192.1 2298.1 l6.6 -4.4 l6.6 4.4z" fill="#000"/><path d="M1191.1 2296.8 l7.6 -4.8 l7.6 4.8" fill="none" stroke="#6a6a6a" stroke-width="1.1"/><path d="M1182.5 2289.6 h11 M1203.9 2289.6 h11" stroke="#161616" stroke-width="1.6"/>
<clipPath id="c2"><rect x="1009.8" y="1848.7" width="381.5" height="437.1" rx="9.5"/></clipPath>
<clipPath id="c2a"><rect x="1009.8" y="1848.7" width="291.8" height="437.1"/></clipPath>
<g clip-path="url(#c2)">
 <g clip-path="url(#c2a)"><use href="#paint" transform="translate(1009.8 1848.7)"/></g>
 <use href="#ppanel" transform="translate(1009.8 1848.7)"/>
 <use href="#ptools" transform="translate(1009.8 1848.7)"/>
</g>
</svg>

</div>
</body>
</html>
